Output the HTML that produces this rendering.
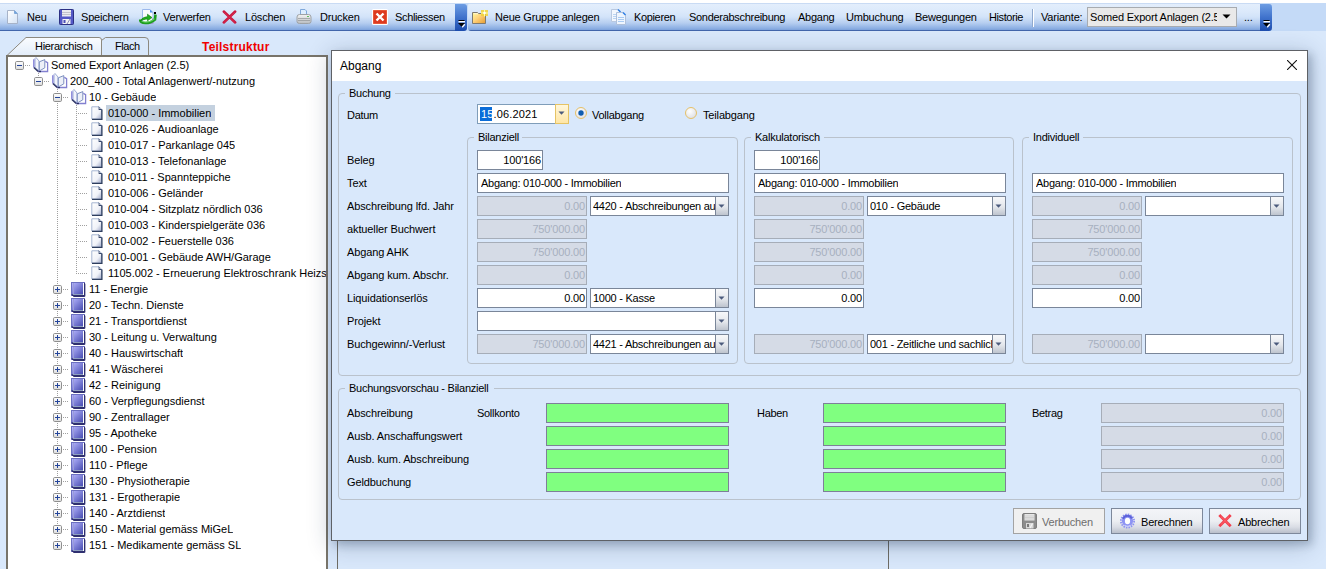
<!DOCTYPE html><html><head><meta charset="utf-8"><style>
html,body{margin:0;padding:0;}
body{width:1326px;height:569px;position:relative;overflow:hidden;background:#D9E8FB;font-family:"Liberation Sans", sans-serif;}
.t{position:absolute;white-space:nowrap;}
div,svg{box-sizing:border-box;}
</style></head><body>
<div style="position:absolute;left:0px;top:0px;width:1326px;height:3px;background:#fff"></div>
<div style="position:absolute;left:0px;top:3px;width:1326px;height:28px;background:#C4DAF7"></div>
<div style="position:absolute;left:0px;top:3px;width:457px;height:28px;background:linear-gradient(to bottom,#C9DBF4 0px,#C9DBF4 1px,#E3EEFC 1px,#DBE9FB 9px,#D2E3F9 14px,#B6CEF0 20px,#93B4E5 24.5px,#7EA3DC 27px,#4266AB 27px,#4266AB 28px);border-radius:0 0 0 0;"></div>
<div style="position:absolute;left:468px;top:3px;width:794px;height:28px;background:linear-gradient(to bottom,#C9DBF4 0px,#C9DBF4 1px,#E3EEFC 1px,#DBE9FB 9px,#D2E3F9 14px,#B6CEF0 20px,#93B4E5 24.5px,#7EA3DC 27px,#4266AB 27px,#4266AB 28px);border-radius:3px 0 0 3px;"></div>
<div style="position:absolute;left:455px;top:4px;width:12px;height:27px;background:linear-gradient(to bottom,#6D9DE3 0%,#3F72CC 50%,#1D4DAE 100%);border-radius:0 3px 3px 0;"></div>
<div style="position:absolute;left:1260px;top:4px;width:12px;height:27px;background:linear-gradient(to bottom,#6D9DE3 0%,#3F72CC 50%,#1D4DAE 100%);border-radius:0 3px 3px 0;"></div>
<svg style="position:absolute;left:456px;top:19px" width="10" height="10" viewBox="0 0 10 10"><rect x="2.5" y="1" width="6" height="1" fill="#000"/><rect x="2.5" y="2" width="6.5" height="1.4" fill="#fff"/><path d="M2 4 H9 L5.5 7.8 Z" fill="#000"/><path d="M8.8 5.2 L6.2 8.2" stroke="#fff" stroke-width="1.3"/></svg>
<svg style="position:absolute;left:1261px;top:19px" width="10" height="10" viewBox="0 0 10 10"><rect x="2.5" y="1" width="6" height="1" fill="#000"/><rect x="2.5" y="2" width="6.5" height="1.4" fill="#fff"/><path d="M2 4 H9 L5.5 7.8 Z" fill="#000"/><path d="M8.8 5.2 L6.2 8.2" stroke="#fff" stroke-width="1.3"/></svg>
<svg width="0" height="0" style="position:absolute"><defs>
<linearGradient id="gpage" x1="0" y1="0" x2="1" y2="1"><stop offset="0" stop-color="#FFFFFF"/><stop offset="1" stop-color="#D5E3F5"/></linearGradient>
<linearGradient id="gbook" x1="0" y1="0" x2="1" y2="1"><stop offset="0" stop-color="#B8B8FF"/><stop offset="1" stop-color="#3A3FA8"/></linearGradient>
<linearGradient id="gdoc" x1="0" y1="0" x2="1" y2="1"><stop offset="0" stop-color="#FFFFFF"/><stop offset="0.6" stop-color="#F0F2F8"/><stop offset="1" stop-color="#9EA8C8"/></linearGradient>
<linearGradient id="gfold" x1="0" y1="0" x2="1" y2="1"><stop offset="0" stop-color="#FFFCA0"/><stop offset="0.45" stop-color="#FFD27A"/><stop offset="1" stop-color="#E59A2E"/></linearGradient><linearGradient id="gprint" x1="0" y1="0" x2="0" y2="1"><stop offset="0" stop-color="#F4F4F4"/><stop offset="1" stop-color="#B8BCC0"/></linearGradient>
<linearGradient id="gbtn" x1="0" y1="0" x2="0" y2="1"><stop offset="0" stop-color="#FBFBFC"/><stop offset="0.5" stop-color="#ECEDF0"/><stop offset="1" stop-color="#C9CCD4"/></linearGradient>
</defs></svg>
<svg style="position:absolute;left:6px;top:10px" width="13" height="15" viewBox="0 0 13 15"><path d="M1.5 0.5 H8.5 L11.5 3.5 V13.5 H1.5 Z" fill="url(#gpage)" stroke="#A7B3C8"/><path d="M8.5 0.5 V3.5 H11.5" fill="#6BA6E6" stroke="#7FA6D6"/></svg>
<div class="t" style="left:27px;top:11.69px;font-size:11px;line-height:11px;color:#000;letter-spacing:-0.2px;">Neu</div>
<svg style="position:absolute;left:59px;top:9px" width="15" height="16" viewBox="0 0 15 16"><rect x="0.5" y="0.5" width="14" height="15" rx="0.8" fill="#5458C6" stroke="#2C3083"/><rect x="3" y="1" width="9" height="6.5" fill="#ECECF0"/><rect x="3" y="3" width="9" height="0.8" fill="#B9B9C4"/><rect x="3" y="5" width="9" height="0.8" fill="#B9B9C4"/><rect x="3.5" y="10" width="8" height="5" fill="#F2F2F4"/><rect x="4.5" y="11" width="2" height="3" fill="#4A4FB8"/><path d="M8 15 L11 10" stroke="#6D6FA8" stroke-width="0.8"/></svg>
<div class="t" style="left:81px;top:11.69px;font-size:11px;line-height:11px;color:#000;letter-spacing:-0.2px;">Speichern</div>
<svg style="position:absolute;left:139px;top:8px" width="18" height="17" viewBox="0 0 18 17"><path d="M3.5 1.5 H11 L14 4.5 V15.5 H3.5 Z" fill="#FAFCFF" stroke="#9BB8EC" stroke-width="1"/><path d="M3.5 15.5 H14 V10" fill="none" stroke="#A894D8" stroke-width="1"/><path d="M11 1.5 V4.5 H14 Z" fill="#4C92F0"/><rect x="15" y="4" width="2" height="2" fill="#000"/><path d="M1.2 11.5 C1 16, 10 16.5, 16 11.5 L16.5 6.5" stroke="#1E9E1E" stroke-width="2.6" fill="none"/><path d="M2 12.5 C5 15, 11 14.5, 15.5 11" stroke="#7BE07B" stroke-width="0.9" fill="none"/><path d="M1.5 13 C2.5 10, 6 8.8, 8.5 8.8 L8.5 6.2 L13 9.6 L8.5 12.8 L8.5 11 C6 11, 3.5 12, 1.5 13 Z" fill="#22B022" stroke="#0D7A0D" stroke-width="0.6"/></svg>
<div class="t" style="left:163px;top:11.69px;font-size:11px;line-height:11px;color:#000;letter-spacing:-0.2px;">Verwerfen</div>
<svg style="position:absolute;left:222px;top:10px" width="15" height="14" viewBox="0 0 15 14"><path d="M1.8 1.5 L13.2 12.5 M13.2 1.5 L1.8 12.5" stroke="#C8173F" stroke-width="2.5" stroke-linecap="round"/><path d="M2.5 2.5 L12.5 12 M12.5 2.5 L2.5 12" stroke="#DE2E55" stroke-width="0.8" stroke-linecap="round"/></svg>
<div class="t" style="left:245px;top:11.69px;font-size:11px;line-height:11px;color:#000;letter-spacing:-0.2px;">Löschen</div>
<svg style="position:absolute;left:296px;top:8px" width="16" height="17" viewBox="0 0 16 17"><path d="M4.5 1.5 H9 L10.5 3 V8 H4.5 Z" fill="#DDEEFF" stroke="#7FA8DA" stroke-width="1"/><path d="M1 9 Q1 6.5 3.5 6.5 H12.5 Q15 6.5 15 9 V13.5 Q15 15.5 12.5 15.5 H3.5 Q1 15.5 1 13.5 Z" fill="url(#gprint)" stroke="#9EA2A6" stroke-width="1"/><path d="M2 10.5 H14 M2 12.5 H14" stroke="#8F9397" stroke-width="0.7"/><rect x="11" y="8" width="2" height="1" fill="#5FBF5F"/></svg>
<div class="t" style="left:320px;top:11.69px;font-size:11px;line-height:11px;color:#000;letter-spacing:-0.2px;">Drucken</div>
<svg style="position:absolute;left:372px;top:9px" width="16" height="16" viewBox="0 0 16 16"><rect x="0" y="0" width="16" height="16" rx="1.5" fill="#FFFFFF"/><rect x="1" y="1" width="14" height="14" rx="1" fill="#DC3A20"/><rect x="1.5" y="1.5" width="13" height="13" fill="none" stroke="#F06A4A" stroke-width="0.6"/><path d="M4.5 4.5 L11.5 11.5 M11.5 4.5 L4.5 11.5" stroke="#fff" stroke-width="2.4"/></svg>
<div class="t" style="left:395px;top:11.69px;font-size:11px;line-height:11px;color:#000;letter-spacing:-0.35px;">Schliessen</div>
<svg style="position:absolute;left:471px;top:9px" width="18" height="16" viewBox="0 0 18 16"><path d="M1.5 3.5 H6.5 L7.5 4.5 H14.5 V14.5 H1.5 Z" fill="url(#gfold)" stroke="#7E7A70" stroke-width="1"/><rect x="3" y="4.2" width="4" height="1" fill="#FFF7D8"/><rect x="10" y="1" width="7" height="6" fill="#F2D23A" opacity="0.85"/><path d="M13.5 0.5 V7.5 M10 4 H17" stroke="#FFFFA0" stroke-width="1"/><circle cx="13.5" cy="4" r="1.3" fill="#FFFFFF"/></svg>
<div class="t" style="left:495px;top:11.69px;font-size:11px;line-height:11px;color:#000;letter-spacing:-0.2px;">Neue Gruppe anlegen</div>
<svg style="position:absolute;left:610px;top:8px" width="17" height="18" viewBox="0 0 17 18"><path d="M1.5 1.5 H8 L10.5 4 V13.5 H1.5 Z" fill="#F2F7FE" stroke="#B9C9E0" stroke-width="1"/><path d="M8 1.5 L10.5 4" stroke="#2E7FE6" stroke-width="1.4"/><path d="M6.5 4.5 H13 L15.5 7 V16.5 H6.5 Z" fill="#EEF5FE" stroke="#AFC0DA" stroke-width="1"/><path d="M13 4.5 L15.5 7" stroke="#2E7FE6" stroke-width="1.4"/><path d="M8 9.5 h6 M8 11.5 h6 M8 13.5 h6" stroke="#A9CBF2" stroke-width="1"/><path d="M3 6.5 h3 M3 8.5 h3 M3 10.5 h3" stroke="#B8D4F4" stroke-width="1"/></svg>
<div class="t" style="left:634px;top:11.69px;font-size:11px;line-height:11px;color:#000;letter-spacing:-0.35px;">Kopieren</div>
<div class="t" style="left:689px;top:11.69px;font-size:11px;line-height:11px;color:#000;letter-spacing:-0.3px;">Sonderabschreibung</div>
<div class="t" style="left:798px;top:11.69px;font-size:11px;line-height:11px;color:#000;letter-spacing:-0.25px;">Abgang</div>
<div class="t" style="left:846px;top:11.69px;font-size:11px;line-height:11px;color:#000;letter-spacing:-0.2px;">Umbuchung</div>
<div class="t" style="left:915px;top:11.69px;font-size:11px;line-height:11px;color:#000;letter-spacing:-0.25px;">Bewegungen</div>
<div class="t" style="left:989px;top:11.69px;font-size:11px;line-height:11px;color:#000;letter-spacing:-0.4px;">Historie</div>
<div style="position:absolute;left:1032px;top:9px;width:1px;height:18px;background:#8FA9CE"></div>
<div style="position:absolute;left:1033px;top:9px;width:1px;height:18px;background:#FFFFFF"></div>
<div class="t" style="left:1041px;top:11.69px;font-size:11px;line-height:11px;color:#000;letter-spacing:-0.2px;">Variante:</div>
<div style="position:absolute;left:1087px;top:7px;width:150px;height:20px;background:#E9E9E9;border:1px solid #A7ABB0;"></div>
<div class="t" style="left:1090px;top:11.69px;font-size:11px;line-height:11px;color:#000;letter-spacing:-0.2px;width:127px;overflow:hidden;">Somed Export Anlagen (2.5</div>
<svg style="position:absolute;left:1222px;top:14px" width="9" height="6" viewBox="0 0 9 6"><path d="M0.5 0.5 H8.5 L4.5 4.5 Z" fill="#000"/></svg>
<div class="t" style="left:1244px;top:11.69px;font-size:11px;line-height:11px;color:#000;letter-spacing:-0.2px;">...</div>
<svg style="position:absolute;left:6px;top:36px" width="145" height="21" viewBox="0 0 145 21"><path d="M1 19.5 L20 1.5 H93 Q95.5 1.5 95.5 4 V19.5" fill="url(#gtab1)" stroke="#8D897F"/><path d="M95.5 4.5 L99.5 1.5 H139 Q142.5 1.5 142.5 5 V19.5" fill="#D9E8FB" stroke="#8D897F"/></svg>
<svg width="0" height="0" style="position:absolute"><defs><linearGradient id="gtab1" x1="0" y1="0" x2="0" y2="1"><stop offset="0" stop-color="#FAFCFF"/><stop offset="1" stop-color="#E3EDF9"/></linearGradient></defs></svg>
<div class="t" style="left:35px;top:40.69px;font-size:11px;line-height:11px;color:#000;letter-spacing:-0.3px;">Hierarchisch</div>
<div class="t" style="left:115px;top:40.69px;font-size:11px;line-height:11px;color:#000;letter-spacing:-0.45px;">Flach</div>
<div class="t" style="left:202px;top:40.84px;font-size:12px;line-height:12px;color:#F00000;letter-spacing:0.2px;font-weight:bold;">Teilstruktur</div>
<div style="position:absolute;left:6px;top:55px;width:322px;height:520px;background:#fff;border:2px solid #78746A;border-bottom:none;"></div>
<div style="position:absolute;left:337px;top:540px;width:1px;height:40px;background:#6E6C64"></div>
<div style="position:absolute;left:888px;top:540px;width:1px;height:40px;background:#6E6C64"></div>
<svg style="position:absolute;left:0;top:0" width="330" height="569"><defs><pattern id="dotv" width="1" height="2" patternUnits="userSpaceOnUse"><rect width="1" height="1" fill="#A0A0A0"/></pattern><pattern id="doth" width="2" height="1" patternUnits="userSpaceOnUse"><rect width="1" height="1" fill="#A0A0A0"/></pattern><linearGradient id="gbox" x1="0" y1="0" x2="0" y2="1"><stop offset="0" stop-color="#FFFFFF"/><stop offset="1" stop-color="#DCDCDC"/></linearGradient></defs><rect x="25" y="65" width="1" height="1" fill="#A0A0A0"/><rect x="27" y="65" width="1" height="1" fill="#A0A0A0"/><rect x="29" y="65" width="1" height="1" fill="#A0A0A0"/><rect x="44" y="81" width="1" height="1" fill="#A0A0A0"/><rect x="46" y="81" width="1" height="1" fill="#A0A0A0"/><rect x="48" y="81" width="1" height="1" fill="#A0A0A0"/><rect x="63" y="97" width="1" height="1" fill="#A0A0A0"/><rect x="65" y="97" width="1" height="1" fill="#A0A0A0"/><rect x="67" y="97" width="1" height="1" fill="#A0A0A0"/><rect x="78" y="113" width="1" height="1" fill="#A0A0A0"/><rect x="80" y="113" width="1" height="1" fill="#A0A0A0"/><rect x="82" y="113" width="1" height="1" fill="#A0A0A0"/><rect x="84" y="113" width="1" height="1" fill="#A0A0A0"/><rect x="86" y="113" width="1" height="1" fill="#A0A0A0"/><rect x="78" y="129" width="1" height="1" fill="#A0A0A0"/><rect x="80" y="129" width="1" height="1" fill="#A0A0A0"/><rect x="82" y="129" width="1" height="1" fill="#A0A0A0"/><rect x="84" y="129" width="1" height="1" fill="#A0A0A0"/><rect x="86" y="129" width="1" height="1" fill="#A0A0A0"/><rect x="78" y="145" width="1" height="1" fill="#A0A0A0"/><rect x="80" y="145" width="1" height="1" fill="#A0A0A0"/><rect x="82" y="145" width="1" height="1" fill="#A0A0A0"/><rect x="84" y="145" width="1" height="1" fill="#A0A0A0"/><rect x="86" y="145" width="1" height="1" fill="#A0A0A0"/><rect x="78" y="161" width="1" height="1" fill="#A0A0A0"/><rect x="80" y="161" width="1" height="1" fill="#A0A0A0"/><rect x="82" y="161" width="1" height="1" fill="#A0A0A0"/><rect x="84" y="161" width="1" height="1" fill="#A0A0A0"/><rect x="86" y="161" width="1" height="1" fill="#A0A0A0"/><rect x="78" y="177" width="1" height="1" fill="#A0A0A0"/><rect x="80" y="177" width="1" height="1" fill="#A0A0A0"/><rect x="82" y="177" width="1" height="1" fill="#A0A0A0"/><rect x="84" y="177" width="1" height="1" fill="#A0A0A0"/><rect x="86" y="177" width="1" height="1" fill="#A0A0A0"/><rect x="78" y="193" width="1" height="1" fill="#A0A0A0"/><rect x="80" y="193" width="1" height="1" fill="#A0A0A0"/><rect x="82" y="193" width="1" height="1" fill="#A0A0A0"/><rect x="84" y="193" width="1" height="1" fill="#A0A0A0"/><rect x="86" y="193" width="1" height="1" fill="#A0A0A0"/><rect x="78" y="209" width="1" height="1" fill="#A0A0A0"/><rect x="80" y="209" width="1" height="1" fill="#A0A0A0"/><rect x="82" y="209" width="1" height="1" fill="#A0A0A0"/><rect x="84" y="209" width="1" height="1" fill="#A0A0A0"/><rect x="86" y="209" width="1" height="1" fill="#A0A0A0"/><rect x="78" y="225" width="1" height="1" fill="#A0A0A0"/><rect x="80" y="225" width="1" height="1" fill="#A0A0A0"/><rect x="82" y="225" width="1" height="1" fill="#A0A0A0"/><rect x="84" y="225" width="1" height="1" fill="#A0A0A0"/><rect x="86" y="225" width="1" height="1" fill="#A0A0A0"/><rect x="78" y="241" width="1" height="1" fill="#A0A0A0"/><rect x="80" y="241" width="1" height="1" fill="#A0A0A0"/><rect x="82" y="241" width="1" height="1" fill="#A0A0A0"/><rect x="84" y="241" width="1" height="1" fill="#A0A0A0"/><rect x="86" y="241" width="1" height="1" fill="#A0A0A0"/><rect x="78" y="257" width="1" height="1" fill="#A0A0A0"/><rect x="80" y="257" width="1" height="1" fill="#A0A0A0"/><rect x="82" y="257" width="1" height="1" fill="#A0A0A0"/><rect x="84" y="257" width="1" height="1" fill="#A0A0A0"/><rect x="86" y="257" width="1" height="1" fill="#A0A0A0"/><rect x="78" y="273" width="1" height="1" fill="#A0A0A0"/><rect x="80" y="273" width="1" height="1" fill="#A0A0A0"/><rect x="82" y="273" width="1" height="1" fill="#A0A0A0"/><rect x="84" y="273" width="1" height="1" fill="#A0A0A0"/><rect x="86" y="273" width="1" height="1" fill="#A0A0A0"/><rect x="63" y="289" width="1" height="1" fill="#A0A0A0"/><rect x="65" y="289" width="1" height="1" fill="#A0A0A0"/><rect x="67" y="289" width="1" height="1" fill="#A0A0A0"/><rect x="63" y="305" width="1" height="1" fill="#A0A0A0"/><rect x="65" y="305" width="1" height="1" fill="#A0A0A0"/><rect x="67" y="305" width="1" height="1" fill="#A0A0A0"/><rect x="63" y="321" width="1" height="1" fill="#A0A0A0"/><rect x="65" y="321" width="1" height="1" fill="#A0A0A0"/><rect x="67" y="321" width="1" height="1" fill="#A0A0A0"/><rect x="63" y="337" width="1" height="1" fill="#A0A0A0"/><rect x="65" y="337" width="1" height="1" fill="#A0A0A0"/><rect x="67" y="337" width="1" height="1" fill="#A0A0A0"/><rect x="63" y="353" width="1" height="1" fill="#A0A0A0"/><rect x="65" y="353" width="1" height="1" fill="#A0A0A0"/><rect x="67" y="353" width="1" height="1" fill="#A0A0A0"/><rect x="63" y="369" width="1" height="1" fill="#A0A0A0"/><rect x="65" y="369" width="1" height="1" fill="#A0A0A0"/><rect x="67" y="369" width="1" height="1" fill="#A0A0A0"/><rect x="63" y="385" width="1" height="1" fill="#A0A0A0"/><rect x="65" y="385" width="1" height="1" fill="#A0A0A0"/><rect x="67" y="385" width="1" height="1" fill="#A0A0A0"/><rect x="63" y="401" width="1" height="1" fill="#A0A0A0"/><rect x="65" y="401" width="1" height="1" fill="#A0A0A0"/><rect x="67" y="401" width="1" height="1" fill="#A0A0A0"/><rect x="63" y="417" width="1" height="1" fill="#A0A0A0"/><rect x="65" y="417" width="1" height="1" fill="#A0A0A0"/><rect x="67" y="417" width="1" height="1" fill="#A0A0A0"/><rect x="63" y="433" width="1" height="1" fill="#A0A0A0"/><rect x="65" y="433" width="1" height="1" fill="#A0A0A0"/><rect x="67" y="433" width="1" height="1" fill="#A0A0A0"/><rect x="63" y="449" width="1" height="1" fill="#A0A0A0"/><rect x="65" y="449" width="1" height="1" fill="#A0A0A0"/><rect x="67" y="449" width="1" height="1" fill="#A0A0A0"/><rect x="63" y="465" width="1" height="1" fill="#A0A0A0"/><rect x="65" y="465" width="1" height="1" fill="#A0A0A0"/><rect x="67" y="465" width="1" height="1" fill="#A0A0A0"/><rect x="63" y="481" width="1" height="1" fill="#A0A0A0"/><rect x="65" y="481" width="1" height="1" fill="#A0A0A0"/><rect x="67" y="481" width="1" height="1" fill="#A0A0A0"/><rect x="63" y="497" width="1" height="1" fill="#A0A0A0"/><rect x="65" y="497" width="1" height="1" fill="#A0A0A0"/><rect x="67" y="497" width="1" height="1" fill="#A0A0A0"/><rect x="63" y="513" width="1" height="1" fill="#A0A0A0"/><rect x="65" y="513" width="1" height="1" fill="#A0A0A0"/><rect x="67" y="513" width="1" height="1" fill="#A0A0A0"/><rect x="63" y="529" width="1" height="1" fill="#A0A0A0"/><rect x="65" y="529" width="1" height="1" fill="#A0A0A0"/><rect x="67" y="529" width="1" height="1" fill="#A0A0A0"/><rect x="63" y="545" width="1" height="1" fill="#A0A0A0"/><rect x="65" y="545" width="1" height="1" fill="#A0A0A0"/><rect x="67" y="545" width="1" height="1" fill="#A0A0A0"/><rect x="38" y="73" width="1" height="1" fill="#A0A0A0"/><rect x="38" y="75" width="1" height="1" fill="#A0A0A0"/><rect x="57" y="89" width="1" height="1" fill="#A0A0A0"/><rect x="57" y="91" width="1" height="1" fill="#A0A0A0"/><rect x="76" y="105" width="1" height="1" fill="#A0A0A0"/><rect x="76" y="107" width="1" height="1" fill="#A0A0A0"/><rect x="76" y="109" width="1" height="1" fill="#A0A0A0"/><rect x="76" y="111" width="1" height="1" fill="#A0A0A0"/><rect x="76" y="113" width="1" height="1" fill="#A0A0A0"/><rect x="76" y="115" width="1" height="1" fill="#A0A0A0"/><rect x="76" y="117" width="1" height="1" fill="#A0A0A0"/><rect x="76" y="119" width="1" height="1" fill="#A0A0A0"/><rect x="76" y="121" width="1" height="1" fill="#A0A0A0"/><rect x="76" y="123" width="1" height="1" fill="#A0A0A0"/><rect x="76" y="125" width="1" height="1" fill="#A0A0A0"/><rect x="76" y="127" width="1" height="1" fill="#A0A0A0"/><rect x="76" y="129" width="1" height="1" fill="#A0A0A0"/><rect x="76" y="131" width="1" height="1" fill="#A0A0A0"/><rect x="76" y="133" width="1" height="1" fill="#A0A0A0"/><rect x="76" y="135" width="1" height="1" fill="#A0A0A0"/><rect x="76" y="137" width="1" height="1" fill="#A0A0A0"/><rect x="76" y="139" width="1" height="1" fill="#A0A0A0"/><rect x="76" y="141" width="1" height="1" fill="#A0A0A0"/><rect x="76" y="143" width="1" height="1" fill="#A0A0A0"/><rect x="76" y="145" width="1" height="1" fill="#A0A0A0"/><rect x="76" y="147" width="1" height="1" fill="#A0A0A0"/><rect x="76" y="149" width="1" height="1" fill="#A0A0A0"/><rect x="76" y="151" width="1" height="1" fill="#A0A0A0"/><rect x="76" y="153" width="1" height="1" fill="#A0A0A0"/><rect x="76" y="155" width="1" height="1" fill="#A0A0A0"/><rect x="76" y="157" width="1" height="1" fill="#A0A0A0"/><rect x="76" y="159" width="1" height="1" fill="#A0A0A0"/><rect x="76" y="161" width="1" height="1" fill="#A0A0A0"/><rect x="76" y="163" width="1" height="1" fill="#A0A0A0"/><rect x="76" y="165" width="1" height="1" fill="#A0A0A0"/><rect x="76" y="167" width="1" height="1" fill="#A0A0A0"/><rect x="76" y="169" width="1" height="1" fill="#A0A0A0"/><rect x="76" y="171" width="1" height="1" fill="#A0A0A0"/><rect x="76" y="173" width="1" height="1" fill="#A0A0A0"/><rect x="76" y="175" width="1" height="1" fill="#A0A0A0"/><rect x="76" y="177" width="1" height="1" fill="#A0A0A0"/><rect x="76" y="179" width="1" height="1" fill="#A0A0A0"/><rect x="76" y="181" width="1" height="1" fill="#A0A0A0"/><rect x="76" y="183" width="1" height="1" fill="#A0A0A0"/><rect x="76" y="185" width="1" height="1" fill="#A0A0A0"/><rect x="76" y="187" width="1" height="1" fill="#A0A0A0"/><rect x="76" y="189" width="1" height="1" fill="#A0A0A0"/><rect x="76" y="191" width="1" height="1" fill="#A0A0A0"/><rect x="76" y="193" width="1" height="1" fill="#A0A0A0"/><rect x="76" y="195" width="1" height="1" fill="#A0A0A0"/><rect x="76" y="197" width="1" height="1" fill="#A0A0A0"/><rect x="76" y="199" width="1" height="1" fill="#A0A0A0"/><rect x="76" y="201" width="1" height="1" fill="#A0A0A0"/><rect x="76" y="203" width="1" height="1" fill="#A0A0A0"/><rect x="76" y="205" width="1" height="1" fill="#A0A0A0"/><rect x="76" y="207" width="1" height="1" fill="#A0A0A0"/><rect x="76" y="209" width="1" height="1" fill="#A0A0A0"/><rect x="76" y="211" width="1" height="1" fill="#A0A0A0"/><rect x="76" y="213" width="1" height="1" fill="#A0A0A0"/><rect x="76" y="215" width="1" height="1" fill="#A0A0A0"/><rect x="76" y="217" width="1" height="1" fill="#A0A0A0"/><rect x="76" y="219" width="1" height="1" fill="#A0A0A0"/><rect x="76" y="221" width="1" height="1" fill="#A0A0A0"/><rect x="76" y="223" width="1" height="1" fill="#A0A0A0"/><rect x="76" y="225" width="1" height="1" fill="#A0A0A0"/><rect x="76" y="227" width="1" height="1" fill="#A0A0A0"/><rect x="76" y="229" width="1" height="1" fill="#A0A0A0"/><rect x="76" y="231" width="1" height="1" fill="#A0A0A0"/><rect x="76" y="233" width="1" height="1" fill="#A0A0A0"/><rect x="76" y="235" width="1" height="1" fill="#A0A0A0"/><rect x="76" y="237" width="1" height="1" fill="#A0A0A0"/><rect x="76" y="239" width="1" height="1" fill="#A0A0A0"/><rect x="76" y="241" width="1" height="1" fill="#A0A0A0"/><rect x="76" y="243" width="1" height="1" fill="#A0A0A0"/><rect x="76" y="245" width="1" height="1" fill="#A0A0A0"/><rect x="76" y="247" width="1" height="1" fill="#A0A0A0"/><rect x="76" y="249" width="1" height="1" fill="#A0A0A0"/><rect x="76" y="251" width="1" height="1" fill="#A0A0A0"/><rect x="76" y="253" width="1" height="1" fill="#A0A0A0"/><rect x="76" y="255" width="1" height="1" fill="#A0A0A0"/><rect x="76" y="257" width="1" height="1" fill="#A0A0A0"/><rect x="76" y="259" width="1" height="1" fill="#A0A0A0"/><rect x="76" y="261" width="1" height="1" fill="#A0A0A0"/><rect x="76" y="263" width="1" height="1" fill="#A0A0A0"/><rect x="76" y="265" width="1" height="1" fill="#A0A0A0"/><rect x="76" y="267" width="1" height="1" fill="#A0A0A0"/><rect x="76" y="269" width="1" height="1" fill="#A0A0A0"/><rect x="76" y="271" width="1" height="1" fill="#A0A0A0"/><rect x="76" y="273" width="1" height="1" fill="#A0A0A0"/><rect x="57" y="103" width="1" height="1" fill="#A0A0A0"/><rect x="57" y="105" width="1" height="1" fill="#A0A0A0"/><rect x="57" y="107" width="1" height="1" fill="#A0A0A0"/><rect x="57" y="109" width="1" height="1" fill="#A0A0A0"/><rect x="57" y="111" width="1" height="1" fill="#A0A0A0"/><rect x="57" y="113" width="1" height="1" fill="#A0A0A0"/><rect x="57" y="115" width="1" height="1" fill="#A0A0A0"/><rect x="57" y="117" width="1" height="1" fill="#A0A0A0"/><rect x="57" y="119" width="1" height="1" fill="#A0A0A0"/><rect x="57" y="121" width="1" height="1" fill="#A0A0A0"/><rect x="57" y="123" width="1" height="1" fill="#A0A0A0"/><rect x="57" y="125" width="1" height="1" fill="#A0A0A0"/><rect x="57" y="127" width="1" height="1" fill="#A0A0A0"/><rect x="57" y="129" width="1" height="1" fill="#A0A0A0"/><rect x="57" y="131" width="1" height="1" fill="#A0A0A0"/><rect x="57" y="133" width="1" height="1" fill="#A0A0A0"/><rect x="57" y="135" width="1" height="1" fill="#A0A0A0"/><rect x="57" y="137" width="1" height="1" fill="#A0A0A0"/><rect x="57" y="139" width="1" height="1" fill="#A0A0A0"/><rect x="57" y="141" width="1" height="1" fill="#A0A0A0"/><rect x="57" y="143" width="1" height="1" fill="#A0A0A0"/><rect x="57" y="145" width="1" height="1" fill="#A0A0A0"/><rect x="57" y="147" width="1" height="1" fill="#A0A0A0"/><rect x="57" y="149" width="1" height="1" fill="#A0A0A0"/><rect x="57" y="151" width="1" height="1" fill="#A0A0A0"/><rect x="57" y="153" width="1" height="1" fill="#A0A0A0"/><rect x="57" y="155" width="1" height="1" fill="#A0A0A0"/><rect x="57" y="157" width="1" height="1" fill="#A0A0A0"/><rect x="57" y="159" width="1" height="1" fill="#A0A0A0"/><rect x="57" y="161" width="1" height="1" fill="#A0A0A0"/><rect x="57" y="163" width="1" height="1" fill="#A0A0A0"/><rect x="57" y="165" width="1" height="1" fill="#A0A0A0"/><rect x="57" y="167" width="1" height="1" fill="#A0A0A0"/><rect x="57" y="169" width="1" height="1" fill="#A0A0A0"/><rect x="57" y="171" width="1" height="1" fill="#A0A0A0"/><rect x="57" y="173" width="1" height="1" fill="#A0A0A0"/><rect x="57" y="175" width="1" height="1" fill="#A0A0A0"/><rect x="57" y="177" width="1" height="1" fill="#A0A0A0"/><rect x="57" y="179" width="1" height="1" fill="#A0A0A0"/><rect x="57" y="181" width="1" height="1" fill="#A0A0A0"/><rect x="57" y="183" width="1" height="1" fill="#A0A0A0"/><rect x="57" y="185" width="1" height="1" fill="#A0A0A0"/><rect x="57" y="187" width="1" height="1" fill="#A0A0A0"/><rect x="57" y="189" width="1" height="1" fill="#A0A0A0"/><rect x="57" y="191" width="1" height="1" fill="#A0A0A0"/><rect x="57" y="193" width="1" height="1" fill="#A0A0A0"/><rect x="57" y="195" width="1" height="1" fill="#A0A0A0"/><rect x="57" y="197" width="1" height="1" fill="#A0A0A0"/><rect x="57" y="199" width="1" height="1" fill="#A0A0A0"/><rect x="57" y="201" width="1" height="1" fill="#A0A0A0"/><rect x="57" y="203" width="1" height="1" fill="#A0A0A0"/><rect x="57" y="205" width="1" height="1" fill="#A0A0A0"/><rect x="57" y="207" width="1" height="1" fill="#A0A0A0"/><rect x="57" y="209" width="1" height="1" fill="#A0A0A0"/><rect x="57" y="211" width="1" height="1" fill="#A0A0A0"/><rect x="57" y="213" width="1" height="1" fill="#A0A0A0"/><rect x="57" y="215" width="1" height="1" fill="#A0A0A0"/><rect x="57" y="217" width="1" height="1" fill="#A0A0A0"/><rect x="57" y="219" width="1" height="1" fill="#A0A0A0"/><rect x="57" y="221" width="1" height="1" fill="#A0A0A0"/><rect x="57" y="223" width="1" height="1" fill="#A0A0A0"/><rect x="57" y="225" width="1" height="1" fill="#A0A0A0"/><rect x="57" y="227" width="1" height="1" fill="#A0A0A0"/><rect x="57" y="229" width="1" height="1" fill="#A0A0A0"/><rect x="57" y="231" width="1" height="1" fill="#A0A0A0"/><rect x="57" y="233" width="1" height="1" fill="#A0A0A0"/><rect x="57" y="235" width="1" height="1" fill="#A0A0A0"/><rect x="57" y="237" width="1" height="1" fill="#A0A0A0"/><rect x="57" y="239" width="1" height="1" fill="#A0A0A0"/><rect x="57" y="241" width="1" height="1" fill="#A0A0A0"/><rect x="57" y="243" width="1" height="1" fill="#A0A0A0"/><rect x="57" y="245" width="1" height="1" fill="#A0A0A0"/><rect x="57" y="247" width="1" height="1" fill="#A0A0A0"/><rect x="57" y="249" width="1" height="1" fill="#A0A0A0"/><rect x="57" y="251" width="1" height="1" fill="#A0A0A0"/><rect x="57" y="253" width="1" height="1" fill="#A0A0A0"/><rect x="57" y="255" width="1" height="1" fill="#A0A0A0"/><rect x="57" y="257" width="1" height="1" fill="#A0A0A0"/><rect x="57" y="259" width="1" height="1" fill="#A0A0A0"/><rect x="57" y="261" width="1" height="1" fill="#A0A0A0"/><rect x="57" y="263" width="1" height="1" fill="#A0A0A0"/><rect x="57" y="265" width="1" height="1" fill="#A0A0A0"/><rect x="57" y="267" width="1" height="1" fill="#A0A0A0"/><rect x="57" y="269" width="1" height="1" fill="#A0A0A0"/><rect x="57" y="271" width="1" height="1" fill="#A0A0A0"/><rect x="57" y="273" width="1" height="1" fill="#A0A0A0"/><rect x="57" y="275" width="1" height="1" fill="#A0A0A0"/><rect x="57" y="277" width="1" height="1" fill="#A0A0A0"/><rect x="57" y="279" width="1" height="1" fill="#A0A0A0"/><rect x="57" y="281" width="1" height="1" fill="#A0A0A0"/><rect x="57" y="283" width="1" height="1" fill="#A0A0A0"/><rect x="57" y="285" width="1" height="1" fill="#A0A0A0"/><rect x="57" y="287" width="1" height="1" fill="#A0A0A0"/><rect x="57" y="289" width="1" height="1" fill="#A0A0A0"/><rect x="57" y="291" width="1" height="1" fill="#A0A0A0"/><rect x="57" y="293" width="1" height="1" fill="#A0A0A0"/><rect x="57" y="295" width="1" height="1" fill="#A0A0A0"/><rect x="57" y="297" width="1" height="1" fill="#A0A0A0"/><rect x="57" y="299" width="1" height="1" fill="#A0A0A0"/><rect x="57" y="301" width="1" height="1" fill="#A0A0A0"/><rect x="57" y="303" width="1" height="1" fill="#A0A0A0"/><rect x="57" y="305" width="1" height="1" fill="#A0A0A0"/><rect x="57" y="307" width="1" height="1" fill="#A0A0A0"/><rect x="57" y="309" width="1" height="1" fill="#A0A0A0"/><rect x="57" y="311" width="1" height="1" fill="#A0A0A0"/><rect x="57" y="313" width="1" height="1" fill="#A0A0A0"/><rect x="57" y="315" width="1" height="1" fill="#A0A0A0"/><rect x="57" y="317" width="1" height="1" fill="#A0A0A0"/><rect x="57" y="319" width="1" height="1" fill="#A0A0A0"/><rect x="57" y="321" width="1" height="1" fill="#A0A0A0"/><rect x="57" y="323" width="1" height="1" fill="#A0A0A0"/><rect x="57" y="325" width="1" height="1" fill="#A0A0A0"/><rect x="57" y="327" width="1" height="1" fill="#A0A0A0"/><rect x="57" y="329" width="1" height="1" fill="#A0A0A0"/><rect x="57" y="331" width="1" height="1" fill="#A0A0A0"/><rect x="57" y="333" width="1" height="1" fill="#A0A0A0"/><rect x="57" y="335" width="1" height="1" fill="#A0A0A0"/><rect x="57" y="337" width="1" height="1" fill="#A0A0A0"/><rect x="57" y="339" width="1" height="1" fill="#A0A0A0"/><rect x="57" y="341" width="1" height="1" fill="#A0A0A0"/><rect x="57" y="343" width="1" height="1" fill="#A0A0A0"/><rect x="57" y="345" width="1" height="1" fill="#A0A0A0"/><rect x="57" y="347" width="1" height="1" fill="#A0A0A0"/><rect x="57" y="349" width="1" height="1" fill="#A0A0A0"/><rect x="57" y="351" width="1" height="1" fill="#A0A0A0"/><rect x="57" y="353" width="1" height="1" fill="#A0A0A0"/><rect x="57" y="355" width="1" height="1" fill="#A0A0A0"/><rect x="57" y="357" width="1" height="1" fill="#A0A0A0"/><rect x="57" y="359" width="1" height="1" fill="#A0A0A0"/><rect x="57" y="361" width="1" height="1" fill="#A0A0A0"/><rect x="57" y="363" width="1" height="1" fill="#A0A0A0"/><rect x="57" y="365" width="1" height="1" fill="#A0A0A0"/><rect x="57" y="367" width="1" height="1" fill="#A0A0A0"/><rect x="57" y="369" width="1" height="1" fill="#A0A0A0"/><rect x="57" y="371" width="1" height="1" fill="#A0A0A0"/><rect x="57" y="373" width="1" height="1" fill="#A0A0A0"/><rect x="57" y="375" width="1" height="1" fill="#A0A0A0"/><rect x="57" y="377" width="1" height="1" fill="#A0A0A0"/><rect x="57" y="379" width="1" height="1" fill="#A0A0A0"/><rect x="57" y="381" width="1" height="1" fill="#A0A0A0"/><rect x="57" y="383" width="1" height="1" fill="#A0A0A0"/><rect x="57" y="385" width="1" height="1" fill="#A0A0A0"/><rect x="57" y="387" width="1" height="1" fill="#A0A0A0"/><rect x="57" y="389" width="1" height="1" fill="#A0A0A0"/><rect x="57" y="391" width="1" height="1" fill="#A0A0A0"/><rect x="57" y="393" width="1" height="1" fill="#A0A0A0"/><rect x="57" y="395" width="1" height="1" fill="#A0A0A0"/><rect x="57" y="397" width="1" height="1" fill="#A0A0A0"/><rect x="57" y="399" width="1" height="1" fill="#A0A0A0"/><rect x="57" y="401" width="1" height="1" fill="#A0A0A0"/><rect x="57" y="403" width="1" height="1" fill="#A0A0A0"/><rect x="57" y="405" width="1" height="1" fill="#A0A0A0"/><rect x="57" y="407" width="1" height="1" fill="#A0A0A0"/><rect x="57" y="409" width="1" height="1" fill="#A0A0A0"/><rect x="57" y="411" width="1" height="1" fill="#A0A0A0"/><rect x="57" y="413" width="1" height="1" fill="#A0A0A0"/><rect x="57" y="415" width="1" height="1" fill="#A0A0A0"/><rect x="57" y="417" width="1" height="1" fill="#A0A0A0"/><rect x="57" y="419" width="1" height="1" fill="#A0A0A0"/><rect x="57" y="421" width="1" height="1" fill="#A0A0A0"/><rect x="57" y="423" width="1" height="1" fill="#A0A0A0"/><rect x="57" y="425" width="1" height="1" fill="#A0A0A0"/><rect x="57" y="427" width="1" height="1" fill="#A0A0A0"/><rect x="57" y="429" width="1" height="1" fill="#A0A0A0"/><rect x="57" y="431" width="1" height="1" fill="#A0A0A0"/><rect x="57" y="433" width="1" height="1" fill="#A0A0A0"/><rect x="57" y="435" width="1" height="1" fill="#A0A0A0"/><rect x="57" y="437" width="1" height="1" fill="#A0A0A0"/><rect x="57" y="439" width="1" height="1" fill="#A0A0A0"/><rect x="57" y="441" width="1" height="1" fill="#A0A0A0"/><rect x="57" y="443" width="1" height="1" fill="#A0A0A0"/><rect x="57" y="445" width="1" height="1" fill="#A0A0A0"/><rect x="57" y="447" width="1" height="1" fill="#A0A0A0"/><rect x="57" y="449" width="1" height="1" fill="#A0A0A0"/><rect x="57" y="451" width="1" height="1" fill="#A0A0A0"/><rect x="57" y="453" width="1" height="1" fill="#A0A0A0"/><rect x="57" y="455" width="1" height="1" fill="#A0A0A0"/><rect x="57" y="457" width="1" height="1" fill="#A0A0A0"/><rect x="57" y="459" width="1" height="1" fill="#A0A0A0"/><rect x="57" y="461" width="1" height="1" fill="#A0A0A0"/><rect x="57" y="463" width="1" height="1" fill="#A0A0A0"/><rect x="57" y="465" width="1" height="1" fill="#A0A0A0"/><rect x="57" y="467" width="1" height="1" fill="#A0A0A0"/><rect x="57" y="469" width="1" height="1" fill="#A0A0A0"/><rect x="57" y="471" width="1" height="1" fill="#A0A0A0"/><rect x="57" y="473" width="1" height="1" fill="#A0A0A0"/><rect x="57" y="475" width="1" height="1" fill="#A0A0A0"/><rect x="57" y="477" width="1" height="1" fill="#A0A0A0"/><rect x="57" y="479" width="1" height="1" fill="#A0A0A0"/><rect x="57" y="481" width="1" height="1" fill="#A0A0A0"/><rect x="57" y="483" width="1" height="1" fill="#A0A0A0"/><rect x="57" y="485" width="1" height="1" fill="#A0A0A0"/><rect x="57" y="487" width="1" height="1" fill="#A0A0A0"/><rect x="57" y="489" width="1" height="1" fill="#A0A0A0"/><rect x="57" y="491" width="1" height="1" fill="#A0A0A0"/><rect x="57" y="493" width="1" height="1" fill="#A0A0A0"/><rect x="57" y="495" width="1" height="1" fill="#A0A0A0"/><rect x="57" y="497" width="1" height="1" fill="#A0A0A0"/><rect x="57" y="499" width="1" height="1" fill="#A0A0A0"/><rect x="57" y="501" width="1" height="1" fill="#A0A0A0"/><rect x="57" y="503" width="1" height="1" fill="#A0A0A0"/><rect x="57" y="505" width="1" height="1" fill="#A0A0A0"/><rect x="57" y="507" width="1" height="1" fill="#A0A0A0"/><rect x="57" y="509" width="1" height="1" fill="#A0A0A0"/><rect x="57" y="511" width="1" height="1" fill="#A0A0A0"/><rect x="57" y="513" width="1" height="1" fill="#A0A0A0"/><rect x="57" y="515" width="1" height="1" fill="#A0A0A0"/><rect x="57" y="517" width="1" height="1" fill="#A0A0A0"/><rect x="57" y="519" width="1" height="1" fill="#A0A0A0"/><rect x="57" y="521" width="1" height="1" fill="#A0A0A0"/><rect x="57" y="523" width="1" height="1" fill="#A0A0A0"/><rect x="57" y="525" width="1" height="1" fill="#A0A0A0"/><rect x="57" y="527" width="1" height="1" fill="#A0A0A0"/><rect x="57" y="529" width="1" height="1" fill="#A0A0A0"/><rect x="57" y="531" width="1" height="1" fill="#A0A0A0"/><rect x="57" y="533" width="1" height="1" fill="#A0A0A0"/><rect x="57" y="535" width="1" height="1" fill="#A0A0A0"/><rect x="57" y="537" width="1" height="1" fill="#A0A0A0"/><rect x="57" y="539" width="1" height="1" fill="#A0A0A0"/><g transform="translate(15,61)"><rect x="0.5" y="0.5" width="8" height="8" rx="1.2" fill="url(#gbox)" stroke="#8E8E8E"/><rect x="2" y="4" width="5" height="1" fill="#23449A"/></g><g transform="translate(33,57)"><path d="M2 1.5 L3 0.5 L6 4 V14 L2 10.5 Z" fill="#F3F5FB" stroke="#92A2CF" stroke-width="0.9"/><path d="M6.3 14 V4.8 L11.8 2.6 V10.8 Z" fill="#EDF0F8" stroke="#6F84B8" stroke-width="0.9"/><path d="M0.8 2.2 V10.6" stroke="#8C8ADA" stroke-width="1.5"/><path d="M0.9 10.4 L5.2 14.4" stroke="#2B3162" stroke-width="1.4"/><path d="M5 14.5 H14.6 V5.6 L12.3 4.4" fill="none" stroke="#8280D0" stroke-width="1.3"/><path d="M5.5 14.6 H8" stroke="#2B3162" stroke-width="1.2"/></g><g transform="translate(34,77)"><rect x="0.5" y="0.5" width="8" height="8" rx="1.2" fill="url(#gbox)" stroke="#8E8E8E"/><rect x="2" y="4" width="5" height="1" fill="#23449A"/></g><g transform="translate(52,73)"><path d="M2 1.5 L3 0.5 L6 4 V14 L2 10.5 Z" fill="#F3F5FB" stroke="#92A2CF" stroke-width="0.9"/><path d="M6.3 14 V4.8 L11.8 2.6 V10.8 Z" fill="#EDF0F8" stroke="#6F84B8" stroke-width="0.9"/><path d="M0.8 2.2 V10.6" stroke="#8C8ADA" stroke-width="1.5"/><path d="M0.9 10.4 L5.2 14.4" stroke="#2B3162" stroke-width="1.4"/><path d="M5 14.5 H14.6 V5.6 L12.3 4.4" fill="none" stroke="#8280D0" stroke-width="1.3"/><path d="M5.5 14.6 H8" stroke="#2B3162" stroke-width="1.2"/></g><g transform="translate(53,93)"><rect x="0.5" y="0.5" width="8" height="8" rx="1.2" fill="url(#gbox)" stroke="#8E8E8E"/><rect x="2" y="4" width="5" height="1" fill="#23449A"/></g><g transform="translate(71,89)"><path d="M2 1.5 L3 0.5 L6 4 V14 L2 10.5 Z" fill="#F3F5FB" stroke="#92A2CF" stroke-width="0.9"/><path d="M6.3 14 V4.8 L11.8 2.6 V10.8 Z" fill="#EDF0F8" stroke="#6F84B8" stroke-width="0.9"/><path d="M0.8 2.2 V10.6" stroke="#8C8ADA" stroke-width="1.5"/><path d="M0.9 10.4 L5.2 14.4" stroke="#2B3162" stroke-width="1.4"/><path d="M5 14.5 H14.6 V5.6 L12.3 4.4" fill="none" stroke="#8280D0" stroke-width="1.3"/><path d="M5.5 14.6 H8" stroke="#2B3162" stroke-width="1.2"/></g><g transform="translate(91,106)"><path d="M0.8 0.8 H8 L10.5 3.3 V13 H0.8 Z" fill="url(#gdoc)" stroke="#A6B5D2" stroke-width="1"/><path d="M1 13.4 H10.9 V3.5" fill="none" stroke="#2E3E5E" stroke-width="1.3"/><path d="M7.6 0.3 L11.2 3.9 L7.6 3.9 Z" fill="#34456A"/><rect x="8.4" y="1.6" width="1.3" height="1.3" fill="#E8EEF8"/></g><g transform="translate(91,122)"><path d="M0.8 0.8 H8 L10.5 3.3 V13 H0.8 Z" fill="url(#gdoc)" stroke="#A6B5D2" stroke-width="1"/><path d="M1 13.4 H10.9 V3.5" fill="none" stroke="#2E3E5E" stroke-width="1.3"/><path d="M7.6 0.3 L11.2 3.9 L7.6 3.9 Z" fill="#34456A"/><rect x="8.4" y="1.6" width="1.3" height="1.3" fill="#E8EEF8"/></g><g transform="translate(91,138)"><path d="M0.8 0.8 H8 L10.5 3.3 V13 H0.8 Z" fill="url(#gdoc)" stroke="#A6B5D2" stroke-width="1"/><path d="M1 13.4 H10.9 V3.5" fill="none" stroke="#2E3E5E" stroke-width="1.3"/><path d="M7.6 0.3 L11.2 3.9 L7.6 3.9 Z" fill="#34456A"/><rect x="8.4" y="1.6" width="1.3" height="1.3" fill="#E8EEF8"/></g><g transform="translate(91,154)"><path d="M0.8 0.8 H8 L10.5 3.3 V13 H0.8 Z" fill="url(#gdoc)" stroke="#A6B5D2" stroke-width="1"/><path d="M1 13.4 H10.9 V3.5" fill="none" stroke="#2E3E5E" stroke-width="1.3"/><path d="M7.6 0.3 L11.2 3.9 L7.6 3.9 Z" fill="#34456A"/><rect x="8.4" y="1.6" width="1.3" height="1.3" fill="#E8EEF8"/></g><g transform="translate(91,170)"><path d="M0.8 0.8 H8 L10.5 3.3 V13 H0.8 Z" fill="url(#gdoc)" stroke="#A6B5D2" stroke-width="1"/><path d="M1 13.4 H10.9 V3.5" fill="none" stroke="#2E3E5E" stroke-width="1.3"/><path d="M7.6 0.3 L11.2 3.9 L7.6 3.9 Z" fill="#34456A"/><rect x="8.4" y="1.6" width="1.3" height="1.3" fill="#E8EEF8"/></g><g transform="translate(91,186)"><path d="M0.8 0.8 H8 L10.5 3.3 V13 H0.8 Z" fill="url(#gdoc)" stroke="#A6B5D2" stroke-width="1"/><path d="M1 13.4 H10.9 V3.5" fill="none" stroke="#2E3E5E" stroke-width="1.3"/><path d="M7.6 0.3 L11.2 3.9 L7.6 3.9 Z" fill="#34456A"/><rect x="8.4" y="1.6" width="1.3" height="1.3" fill="#E8EEF8"/></g><g transform="translate(91,202)"><path d="M0.8 0.8 H8 L10.5 3.3 V13 H0.8 Z" fill="url(#gdoc)" stroke="#A6B5D2" stroke-width="1"/><path d="M1 13.4 H10.9 V3.5" fill="none" stroke="#2E3E5E" stroke-width="1.3"/><path d="M7.6 0.3 L11.2 3.9 L7.6 3.9 Z" fill="#34456A"/><rect x="8.4" y="1.6" width="1.3" height="1.3" fill="#E8EEF8"/></g><g transform="translate(91,218)"><path d="M0.8 0.8 H8 L10.5 3.3 V13 H0.8 Z" fill="url(#gdoc)" stroke="#A6B5D2" stroke-width="1"/><path d="M1 13.4 H10.9 V3.5" fill="none" stroke="#2E3E5E" stroke-width="1.3"/><path d="M7.6 0.3 L11.2 3.9 L7.6 3.9 Z" fill="#34456A"/><rect x="8.4" y="1.6" width="1.3" height="1.3" fill="#E8EEF8"/></g><g transform="translate(91,234)"><path d="M0.8 0.8 H8 L10.5 3.3 V13 H0.8 Z" fill="url(#gdoc)" stroke="#A6B5D2" stroke-width="1"/><path d="M1 13.4 H10.9 V3.5" fill="none" stroke="#2E3E5E" stroke-width="1.3"/><path d="M7.6 0.3 L11.2 3.9 L7.6 3.9 Z" fill="#34456A"/><rect x="8.4" y="1.6" width="1.3" height="1.3" fill="#E8EEF8"/></g><g transform="translate(91,250)"><path d="M0.8 0.8 H8 L10.5 3.3 V13 H0.8 Z" fill="url(#gdoc)" stroke="#A6B5D2" stroke-width="1"/><path d="M1 13.4 H10.9 V3.5" fill="none" stroke="#2E3E5E" stroke-width="1.3"/><path d="M7.6 0.3 L11.2 3.9 L7.6 3.9 Z" fill="#34456A"/><rect x="8.4" y="1.6" width="1.3" height="1.3" fill="#E8EEF8"/></g><g transform="translate(91,266)"><path d="M0.8 0.8 H8 L10.5 3.3 V13 H0.8 Z" fill="url(#gdoc)" stroke="#A6B5D2" stroke-width="1"/><path d="M1 13.4 H10.9 V3.5" fill="none" stroke="#2E3E5E" stroke-width="1.3"/><path d="M7.6 0.3 L11.2 3.9 L7.6 3.9 Z" fill="#34456A"/><rect x="8.4" y="1.6" width="1.3" height="1.3" fill="#E8EEF8"/></g><g transform="translate(53,285)"><rect x="0.5" y="0.5" width="8" height="8" rx="1.2" fill="url(#gbox)" stroke="#8E8E8E"/><rect x="2" y="4" width="5" height="1" fill="#23449A"/><rect x="4" y="2" width="1" height="5" fill="#23449A"/></g><g transform="translate(71,282)"><rect x="0.5" y="0.5" width="13" height="13" fill="url(#gbook)" stroke="#6B6FC0" stroke-width="1"/><rect x="2" y="1" width="1" height="12" fill="#9A9CD8"/><path d="M1 13.5 H13.5 V1" stroke="#2E2E70" stroke-width="1.2" fill="none"/><path d="M12.5 1 V13" stroke="#fff" stroke-width="1"/><path d="M0.8 12 L2.5 14.5 H13.8 V2" fill="none" stroke="#303070" stroke-width="1"/><rect x="2" y="12" width="10" height="1" fill="#8FA0C0"/></g><g transform="translate(53,301)"><rect x="0.5" y="0.5" width="8" height="8" rx="1.2" fill="url(#gbox)" stroke="#8E8E8E"/><rect x="2" y="4" width="5" height="1" fill="#23449A"/><rect x="4" y="2" width="1" height="5" fill="#23449A"/></g><g transform="translate(71,298)"><rect x="0.5" y="0.5" width="13" height="13" fill="url(#gbook)" stroke="#6B6FC0" stroke-width="1"/><rect x="2" y="1" width="1" height="12" fill="#9A9CD8"/><path d="M1 13.5 H13.5 V1" stroke="#2E2E70" stroke-width="1.2" fill="none"/><path d="M12.5 1 V13" stroke="#fff" stroke-width="1"/><path d="M0.8 12 L2.5 14.5 H13.8 V2" fill="none" stroke="#303070" stroke-width="1"/><rect x="2" y="12" width="10" height="1" fill="#8FA0C0"/></g><g transform="translate(53,317)"><rect x="0.5" y="0.5" width="8" height="8" rx="1.2" fill="url(#gbox)" stroke="#8E8E8E"/><rect x="2" y="4" width="5" height="1" fill="#23449A"/><rect x="4" y="2" width="1" height="5" fill="#23449A"/></g><g transform="translate(71,314)"><rect x="0.5" y="0.5" width="13" height="13" fill="url(#gbook)" stroke="#6B6FC0" stroke-width="1"/><rect x="2" y="1" width="1" height="12" fill="#9A9CD8"/><path d="M1 13.5 H13.5 V1" stroke="#2E2E70" stroke-width="1.2" fill="none"/><path d="M12.5 1 V13" stroke="#fff" stroke-width="1"/><path d="M0.8 12 L2.5 14.5 H13.8 V2" fill="none" stroke="#303070" stroke-width="1"/><rect x="2" y="12" width="10" height="1" fill="#8FA0C0"/></g><g transform="translate(53,333)"><rect x="0.5" y="0.5" width="8" height="8" rx="1.2" fill="url(#gbox)" stroke="#8E8E8E"/><rect x="2" y="4" width="5" height="1" fill="#23449A"/><rect x="4" y="2" width="1" height="5" fill="#23449A"/></g><g transform="translate(71,330)"><rect x="0.5" y="0.5" width="13" height="13" fill="url(#gbook)" stroke="#6B6FC0" stroke-width="1"/><rect x="2" y="1" width="1" height="12" fill="#9A9CD8"/><path d="M1 13.5 H13.5 V1" stroke="#2E2E70" stroke-width="1.2" fill="none"/><path d="M12.5 1 V13" stroke="#fff" stroke-width="1"/><path d="M0.8 12 L2.5 14.5 H13.8 V2" fill="none" stroke="#303070" stroke-width="1"/><rect x="2" y="12" width="10" height="1" fill="#8FA0C0"/></g><g transform="translate(53,349)"><rect x="0.5" y="0.5" width="8" height="8" rx="1.2" fill="url(#gbox)" stroke="#8E8E8E"/><rect x="2" y="4" width="5" height="1" fill="#23449A"/><rect x="4" y="2" width="1" height="5" fill="#23449A"/></g><g transform="translate(71,346)"><rect x="0.5" y="0.5" width="13" height="13" fill="url(#gbook)" stroke="#6B6FC0" stroke-width="1"/><rect x="2" y="1" width="1" height="12" fill="#9A9CD8"/><path d="M1 13.5 H13.5 V1" stroke="#2E2E70" stroke-width="1.2" fill="none"/><path d="M12.5 1 V13" stroke="#fff" stroke-width="1"/><path d="M0.8 12 L2.5 14.5 H13.8 V2" fill="none" stroke="#303070" stroke-width="1"/><rect x="2" y="12" width="10" height="1" fill="#8FA0C0"/></g><g transform="translate(53,365)"><rect x="0.5" y="0.5" width="8" height="8" rx="1.2" fill="url(#gbox)" stroke="#8E8E8E"/><rect x="2" y="4" width="5" height="1" fill="#23449A"/><rect x="4" y="2" width="1" height="5" fill="#23449A"/></g><g transform="translate(71,362)"><rect x="0.5" y="0.5" width="13" height="13" fill="url(#gbook)" stroke="#6B6FC0" stroke-width="1"/><rect x="2" y="1" width="1" height="12" fill="#9A9CD8"/><path d="M1 13.5 H13.5 V1" stroke="#2E2E70" stroke-width="1.2" fill="none"/><path d="M12.5 1 V13" stroke="#fff" stroke-width="1"/><path d="M0.8 12 L2.5 14.5 H13.8 V2" fill="none" stroke="#303070" stroke-width="1"/><rect x="2" y="12" width="10" height="1" fill="#8FA0C0"/></g><g transform="translate(53,381)"><rect x="0.5" y="0.5" width="8" height="8" rx="1.2" fill="url(#gbox)" stroke="#8E8E8E"/><rect x="2" y="4" width="5" height="1" fill="#23449A"/><rect x="4" y="2" width="1" height="5" fill="#23449A"/></g><g transform="translate(71,378)"><rect x="0.5" y="0.5" width="13" height="13" fill="url(#gbook)" stroke="#6B6FC0" stroke-width="1"/><rect x="2" y="1" width="1" height="12" fill="#9A9CD8"/><path d="M1 13.5 H13.5 V1" stroke="#2E2E70" stroke-width="1.2" fill="none"/><path d="M12.5 1 V13" stroke="#fff" stroke-width="1"/><path d="M0.8 12 L2.5 14.5 H13.8 V2" fill="none" stroke="#303070" stroke-width="1"/><rect x="2" y="12" width="10" height="1" fill="#8FA0C0"/></g><g transform="translate(53,397)"><rect x="0.5" y="0.5" width="8" height="8" rx="1.2" fill="url(#gbox)" stroke="#8E8E8E"/><rect x="2" y="4" width="5" height="1" fill="#23449A"/><rect x="4" y="2" width="1" height="5" fill="#23449A"/></g><g transform="translate(71,394)"><rect x="0.5" y="0.5" width="13" height="13" fill="url(#gbook)" stroke="#6B6FC0" stroke-width="1"/><rect x="2" y="1" width="1" height="12" fill="#9A9CD8"/><path d="M1 13.5 H13.5 V1" stroke="#2E2E70" stroke-width="1.2" fill="none"/><path d="M12.5 1 V13" stroke="#fff" stroke-width="1"/><path d="M0.8 12 L2.5 14.5 H13.8 V2" fill="none" stroke="#303070" stroke-width="1"/><rect x="2" y="12" width="10" height="1" fill="#8FA0C0"/></g><g transform="translate(53,413)"><rect x="0.5" y="0.5" width="8" height="8" rx="1.2" fill="url(#gbox)" stroke="#8E8E8E"/><rect x="2" y="4" width="5" height="1" fill="#23449A"/><rect x="4" y="2" width="1" height="5" fill="#23449A"/></g><g transform="translate(71,410)"><rect x="0.5" y="0.5" width="13" height="13" fill="url(#gbook)" stroke="#6B6FC0" stroke-width="1"/><rect x="2" y="1" width="1" height="12" fill="#9A9CD8"/><path d="M1 13.5 H13.5 V1" stroke="#2E2E70" stroke-width="1.2" fill="none"/><path d="M12.5 1 V13" stroke="#fff" stroke-width="1"/><path d="M0.8 12 L2.5 14.5 H13.8 V2" fill="none" stroke="#303070" stroke-width="1"/><rect x="2" y="12" width="10" height="1" fill="#8FA0C0"/></g><g transform="translate(53,429)"><rect x="0.5" y="0.5" width="8" height="8" rx="1.2" fill="url(#gbox)" stroke="#8E8E8E"/><rect x="2" y="4" width="5" height="1" fill="#23449A"/><rect x="4" y="2" width="1" height="5" fill="#23449A"/></g><g transform="translate(71,426)"><rect x="0.5" y="0.5" width="13" height="13" fill="url(#gbook)" stroke="#6B6FC0" stroke-width="1"/><rect x="2" y="1" width="1" height="12" fill="#9A9CD8"/><path d="M1 13.5 H13.5 V1" stroke="#2E2E70" stroke-width="1.2" fill="none"/><path d="M12.5 1 V13" stroke="#fff" stroke-width="1"/><path d="M0.8 12 L2.5 14.5 H13.8 V2" fill="none" stroke="#303070" stroke-width="1"/><rect x="2" y="12" width="10" height="1" fill="#8FA0C0"/></g><g transform="translate(53,445)"><rect x="0.5" y="0.5" width="8" height="8" rx="1.2" fill="url(#gbox)" stroke="#8E8E8E"/><rect x="2" y="4" width="5" height="1" fill="#23449A"/><rect x="4" y="2" width="1" height="5" fill="#23449A"/></g><g transform="translate(71,442)"><rect x="0.5" y="0.5" width="13" height="13" fill="url(#gbook)" stroke="#6B6FC0" stroke-width="1"/><rect x="2" y="1" width="1" height="12" fill="#9A9CD8"/><path d="M1 13.5 H13.5 V1" stroke="#2E2E70" stroke-width="1.2" fill="none"/><path d="M12.5 1 V13" stroke="#fff" stroke-width="1"/><path d="M0.8 12 L2.5 14.5 H13.8 V2" fill="none" stroke="#303070" stroke-width="1"/><rect x="2" y="12" width="10" height="1" fill="#8FA0C0"/></g><g transform="translate(53,461)"><rect x="0.5" y="0.5" width="8" height="8" rx="1.2" fill="url(#gbox)" stroke="#8E8E8E"/><rect x="2" y="4" width="5" height="1" fill="#23449A"/><rect x="4" y="2" width="1" height="5" fill="#23449A"/></g><g transform="translate(71,458)"><rect x="0.5" y="0.5" width="13" height="13" fill="url(#gbook)" stroke="#6B6FC0" stroke-width="1"/><rect x="2" y="1" width="1" height="12" fill="#9A9CD8"/><path d="M1 13.5 H13.5 V1" stroke="#2E2E70" stroke-width="1.2" fill="none"/><path d="M12.5 1 V13" stroke="#fff" stroke-width="1"/><path d="M0.8 12 L2.5 14.5 H13.8 V2" fill="none" stroke="#303070" stroke-width="1"/><rect x="2" y="12" width="10" height="1" fill="#8FA0C0"/></g><g transform="translate(53,477)"><rect x="0.5" y="0.5" width="8" height="8" rx="1.2" fill="url(#gbox)" stroke="#8E8E8E"/><rect x="2" y="4" width="5" height="1" fill="#23449A"/><rect x="4" y="2" width="1" height="5" fill="#23449A"/></g><g transform="translate(71,474)"><rect x="0.5" y="0.5" width="13" height="13" fill="url(#gbook)" stroke="#6B6FC0" stroke-width="1"/><rect x="2" y="1" width="1" height="12" fill="#9A9CD8"/><path d="M1 13.5 H13.5 V1" stroke="#2E2E70" stroke-width="1.2" fill="none"/><path d="M12.5 1 V13" stroke="#fff" stroke-width="1"/><path d="M0.8 12 L2.5 14.5 H13.8 V2" fill="none" stroke="#303070" stroke-width="1"/><rect x="2" y="12" width="10" height="1" fill="#8FA0C0"/></g><g transform="translate(53,493)"><rect x="0.5" y="0.5" width="8" height="8" rx="1.2" fill="url(#gbox)" stroke="#8E8E8E"/><rect x="2" y="4" width="5" height="1" fill="#23449A"/><rect x="4" y="2" width="1" height="5" fill="#23449A"/></g><g transform="translate(71,490)"><rect x="0.5" y="0.5" width="13" height="13" fill="url(#gbook)" stroke="#6B6FC0" stroke-width="1"/><rect x="2" y="1" width="1" height="12" fill="#9A9CD8"/><path d="M1 13.5 H13.5 V1" stroke="#2E2E70" stroke-width="1.2" fill="none"/><path d="M12.5 1 V13" stroke="#fff" stroke-width="1"/><path d="M0.8 12 L2.5 14.5 H13.8 V2" fill="none" stroke="#303070" stroke-width="1"/><rect x="2" y="12" width="10" height="1" fill="#8FA0C0"/></g><g transform="translate(53,509)"><rect x="0.5" y="0.5" width="8" height="8" rx="1.2" fill="url(#gbox)" stroke="#8E8E8E"/><rect x="2" y="4" width="5" height="1" fill="#23449A"/><rect x="4" y="2" width="1" height="5" fill="#23449A"/></g><g transform="translate(71,506)"><rect x="0.5" y="0.5" width="13" height="13" fill="url(#gbook)" stroke="#6B6FC0" stroke-width="1"/><rect x="2" y="1" width="1" height="12" fill="#9A9CD8"/><path d="M1 13.5 H13.5 V1" stroke="#2E2E70" stroke-width="1.2" fill="none"/><path d="M12.5 1 V13" stroke="#fff" stroke-width="1"/><path d="M0.8 12 L2.5 14.5 H13.8 V2" fill="none" stroke="#303070" stroke-width="1"/><rect x="2" y="12" width="10" height="1" fill="#8FA0C0"/></g><g transform="translate(53,525)"><rect x="0.5" y="0.5" width="8" height="8" rx="1.2" fill="url(#gbox)" stroke="#8E8E8E"/><rect x="2" y="4" width="5" height="1" fill="#23449A"/><rect x="4" y="2" width="1" height="5" fill="#23449A"/></g><g transform="translate(71,522)"><rect x="0.5" y="0.5" width="13" height="13" fill="url(#gbook)" stroke="#6B6FC0" stroke-width="1"/><rect x="2" y="1" width="1" height="12" fill="#9A9CD8"/><path d="M1 13.5 H13.5 V1" stroke="#2E2E70" stroke-width="1.2" fill="none"/><path d="M12.5 1 V13" stroke="#fff" stroke-width="1"/><path d="M0.8 12 L2.5 14.5 H13.8 V2" fill="none" stroke="#303070" stroke-width="1"/><rect x="2" y="12" width="10" height="1" fill="#8FA0C0"/></g><g transform="translate(53,541)"><rect x="0.5" y="0.5" width="8" height="8" rx="1.2" fill="url(#gbox)" stroke="#8E8E8E"/><rect x="2" y="4" width="5" height="1" fill="#23449A"/><rect x="4" y="2" width="1" height="5" fill="#23449A"/></g><g transform="translate(71,538)"><rect x="0.5" y="0.5" width="13" height="13" fill="url(#gbook)" stroke="#6B6FC0" stroke-width="1"/><rect x="2" y="1" width="1" height="12" fill="#9A9CD8"/><path d="M1 13.5 H13.5 V1" stroke="#2E2E70" stroke-width="1.2" fill="none"/><path d="M12.5 1 V13" stroke="#fff" stroke-width="1"/><path d="M0.8 12 L2.5 14.5 H13.8 V2" fill="none" stroke="#303070" stroke-width="1"/><rect x="2" y="12" width="10" height="1" fill="#8FA0C0"/></g></svg>
<div style="position:absolute;left:106px;top:105px;width:109px;height:16px;background:#C4D1DF"></div>
<div class="t" style="left:51px;top:59.69px;font-size:11px;line-height:11px;color:#000;letter-spacing:0px;max-width:275px;overflow:hidden;">Somed Export Anlagen (2.5)</div>
<div class="t" style="left:70px;top:75.69px;font-size:11px;line-height:11px;color:#000;letter-spacing:0px;max-width:256px;overflow:hidden;">200_400 - Total Anlagenwert/-nutzung</div>
<div class="t" style="left:89px;top:91.69px;font-size:11px;line-height:11px;color:#000;letter-spacing:0px;max-width:237px;overflow:hidden;">10 - Gebäude</div>
<div class="t" style="left:108px;top:107.69px;font-size:11px;line-height:11px;color:#000;letter-spacing:0px;max-width:218px;overflow:hidden;">010-000 - Immobilien</div>
<div class="t" style="left:108px;top:123.69px;font-size:11px;line-height:11px;color:#000;letter-spacing:0px;max-width:218px;overflow:hidden;">010-026 - Audioanlage</div>
<div class="t" style="left:108px;top:139.69px;font-size:11px;line-height:11px;color:#000;letter-spacing:0px;max-width:218px;overflow:hidden;">010-017 - Parkanlage 045</div>
<div class="t" style="left:108px;top:155.69px;font-size:11px;line-height:11px;color:#000;letter-spacing:0px;max-width:218px;overflow:hidden;">010-013 - Telefonanlage</div>
<div class="t" style="left:108px;top:171.69px;font-size:11px;line-height:11px;color:#000;letter-spacing:0px;max-width:218px;overflow:hidden;">010-011 - Spannteppiche</div>
<div class="t" style="left:108px;top:187.69px;font-size:11px;line-height:11px;color:#000;letter-spacing:0px;max-width:218px;overflow:hidden;">010-006 - Geländer</div>
<div class="t" style="left:108px;top:203.69px;font-size:11px;line-height:11px;color:#000;letter-spacing:0px;max-width:218px;overflow:hidden;">010-004 - Sitzplatz nördlich 036</div>
<div class="t" style="left:108px;top:219.69px;font-size:11px;line-height:11px;color:#000;letter-spacing:0px;max-width:218px;overflow:hidden;">010-003 - Kinderspielgeräte 036</div>
<div class="t" style="left:108px;top:235.69px;font-size:11px;line-height:11px;color:#000;letter-spacing:0px;max-width:218px;overflow:hidden;">010-002 - Feuerstelle 036</div>
<div class="t" style="left:108px;top:251.69px;font-size:11px;line-height:11px;color:#000;letter-spacing:0px;max-width:218px;overflow:hidden;">010-001 - Gebäude AWH/Garage</div>
<div class="t" style="left:108px;top:267.69px;font-size:11px;line-height:11px;color:#000;letter-spacing:0px;max-width:218px;overflow:hidden;">1105.002 - Erneuerung Elektroschrank Heizsystem</div>
<div class="t" style="left:89px;top:283.69px;font-size:11px;line-height:11px;color:#000;letter-spacing:0px;max-width:237px;overflow:hidden;">11 - Energie</div>
<div class="t" style="left:89px;top:299.69px;font-size:11px;line-height:11px;color:#000;letter-spacing:0px;max-width:237px;overflow:hidden;">20 - Techn. Dienste</div>
<div class="t" style="left:89px;top:315.69px;font-size:11px;line-height:11px;color:#000;letter-spacing:0px;max-width:237px;overflow:hidden;">21 - Transportdienst</div>
<div class="t" style="left:89px;top:331.69px;font-size:11px;line-height:11px;color:#000;letter-spacing:0px;max-width:237px;overflow:hidden;">30 - Leitung u. Verwaltung</div>
<div class="t" style="left:89px;top:347.69px;font-size:11px;line-height:11px;color:#000;letter-spacing:0px;max-width:237px;overflow:hidden;">40 - Hauswirtschaft</div>
<div class="t" style="left:89px;top:363.69px;font-size:11px;line-height:11px;color:#000;letter-spacing:0px;max-width:237px;overflow:hidden;">41 - Wäscherei</div>
<div class="t" style="left:89px;top:379.69px;font-size:11px;line-height:11px;color:#000;letter-spacing:0px;max-width:237px;overflow:hidden;">42 - Reinigung</div>
<div class="t" style="left:89px;top:395.69px;font-size:11px;line-height:11px;color:#000;letter-spacing:0px;max-width:237px;overflow:hidden;">60 - Verpflegungsdienst</div>
<div class="t" style="left:89px;top:411.69px;font-size:11px;line-height:11px;color:#000;letter-spacing:0px;max-width:237px;overflow:hidden;">90 - Zentrallager</div>
<div class="t" style="left:89px;top:427.69px;font-size:11px;line-height:11px;color:#000;letter-spacing:0px;max-width:237px;overflow:hidden;">95 - Apotheke</div>
<div class="t" style="left:89px;top:443.69px;font-size:11px;line-height:11px;color:#000;letter-spacing:0px;max-width:237px;overflow:hidden;">100 - Pension</div>
<div class="t" style="left:89px;top:459.69px;font-size:11px;line-height:11px;color:#000;letter-spacing:0px;max-width:237px;overflow:hidden;">110 - Pflege</div>
<div class="t" style="left:89px;top:475.69px;font-size:11px;line-height:11px;color:#000;letter-spacing:0px;max-width:237px;overflow:hidden;">130 - Physiotherapie</div>
<div class="t" style="left:89px;top:491.69px;font-size:11px;line-height:11px;color:#000;letter-spacing:0px;max-width:237px;overflow:hidden;">131 - Ergotherapie</div>
<div class="t" style="left:89px;top:507.69px;font-size:11px;line-height:11px;color:#000;letter-spacing:0px;max-width:237px;overflow:hidden;">140 - Arztdienst</div>
<div class="t" style="left:89px;top:523.69px;font-size:11px;line-height:11px;color:#000;letter-spacing:0px;max-width:237px;overflow:hidden;">150 - Material gemäss MiGeL</div>
<div class="t" style="left:89px;top:539.69px;font-size:11px;line-height:11px;color:#000;letter-spacing:0px;max-width:237px;overflow:hidden;">151 - Medikamente gemäss SL</div>
<div style="position:absolute;left:331px;top:50px;width:977px;height:491px;background:#D9E8FB;border:1px solid #5E6166;box-shadow:0 4px 22px 1px rgba(20,40,75,0.24), 4px 4px 8px 0 rgba(20,40,75,0.22);"></div>
<div style="position:absolute;left:332px;top:51px;width:975px;height:30px;background:#fff"></div>
<div class="t" style="left:340px;top:59.84px;font-size:12px;line-height:12px;color:#000;letter-spacing:0px;">Abgang</div>
<svg style="position:absolute;left:1287px;top:60px" width="10" height="10" viewBox="0 0 10 10"><path d="M0 0 L10 10 M10 0 L0 10" stroke="#111" stroke-width="1.1"/></svg>
<div style="position:absolute;left:338px;top:93px;width:963px;height:283px;border:1px solid #BAC2CC;border-radius:4px;"></div>
<div style="position:absolute;left:345px;top:91px;width:50px;height:5px;background:#D9E8FB"></div>
<div class="t" style="left:349px;top:88.19px;font-size:11px;line-height:11px;color:#000;letter-spacing:-0.25px;">Buchung</div>
<div style="position:absolute;left:467px;top:137px;width:271px;height:227px;border:1px solid #BAC2CC;border-radius:4px;"></div>
<div style="position:absolute;left:474px;top:135px;width:48px;height:5px;background:#D9E8FB"></div>
<div class="t" style="left:478px;top:132.19px;font-size:11px;line-height:11px;color:#000;letter-spacing:-0.25px;">Bilanziell</div>
<div style="position:absolute;left:744px;top:137px;width:270px;height:227px;border:1px solid #BAC2CC;border-radius:4px;"></div>
<div style="position:absolute;left:751px;top:135px;width:73px;height:5px;background:#D9E8FB"></div>
<div class="t" style="left:755px;top:132.19px;font-size:11px;line-height:11px;color:#000;letter-spacing:-0.25px;">Kalkulatorisch</div>
<div style="position:absolute;left:1022px;top:137px;width:271px;height:227px;border:1px solid #BAC2CC;border-radius:4px;"></div>
<div style="position:absolute;left:1029px;top:135px;width:54px;height:5px;background:#D9E8FB"></div>
<div class="t" style="left:1033px;top:132.19px;font-size:11px;line-height:11px;color:#000;letter-spacing:-0.25px;">Individuell</div>
<div style="position:absolute;left:338px;top:388px;width:963px;height:112px;border:1px solid #BAC2CC;border-radius:4px;"></div>
<div style="position:absolute;left:345px;top:386px;width:149px;height:5px;background:#D9E8FB"></div>
<div class="t" style="left:349px;top:383.19px;font-size:11px;line-height:11px;color:#000;letter-spacing:-0.25px;">Buchungsvorschau - Bilanziell</div>
<div class="t" style="left:347px;top:109.69px;font-size:11px;line-height:11px;color:#000;letter-spacing:-0.3px;">Datum</div>
<div style="position:absolute;left:477px;top:104px;width:79px;height:20px;background:#fff;border:1px solid #7F9DB9;border-right:none;"></div>
<div style="position:absolute;left:555px;top:104px;width:14px;height:20px;background:linear-gradient(to bottom,#FFF6DA,#FFE6A6);border:1px solid #E5C365;"></div>
<svg style="position:absolute;left:558px;top:111px" width="7" height="5" viewBox="0 0 7 5"><path d="M0.5 0.5 H6.5 L3.5 3.8 Z" fill="#4B5A7C"/></svg>
<div style="position:absolute;left:480px;top:107px;width:12px;height:14px;background:#0A6CD8"></div>
<div class="t" style="left:481px;top:108.69px;font-size:11px;line-height:11px;color:#000;letter-spacing:0.15px;"><span style="color:#fff">15</span>.06.2021</div>
<svg style="position:absolute;left:575px;top:107px" width="12" height="12" viewBox="0 0 12 12"><defs><radialGradient id="gradio" cx="0.4" cy="0.35" r="0.7"><stop offset="0" stop-color="#FFFFFF"/><stop offset="1" stop-color="#DCDEE4"/></radialGradient></defs><circle cx="6" cy="6" r="5.5" fill="url(#gradio)" stroke="#E5C067" stroke-width="1"/><circle cx="6" cy="6" r="2.7" fill="#0E5CB0"/></svg>
<div class="t" style="left:592px;top:109.69px;font-size:11px;line-height:11px;color:#000;letter-spacing:-0.25px;">Vollabgang</div>
<svg style="position:absolute;left:685px;top:107px" width="12" height="12" viewBox="0 0 12 12"><defs><radialGradient id="gradio" cx="0.4" cy="0.35" r="0.7"><stop offset="0" stop-color="#FFFFFF"/><stop offset="1" stop-color="#DCDEE4"/></radialGradient></defs><circle cx="6" cy="6" r="5.5" fill="url(#gradio)" stroke="#E5C067" stroke-width="1"/></svg>
<div class="t" style="left:703px;top:109.69px;font-size:11px;line-height:11px;color:#000;letter-spacing:-0.15px;">Teilabgang</div>
<div class="t" style="left:347px;top:154.69px;font-size:11px;line-height:11px;color:#000;letter-spacing:-0.12px;">Beleg</div>
<div class="t" style="left:347px;top:177.69px;font-size:11px;line-height:11px;color:#000;letter-spacing:-0.12px;">Text</div>
<div class="t" style="left:347px;top:200.69px;font-size:11px;line-height:11px;color:#000;letter-spacing:-0.12px;">Abschreibung lfd. Jahr</div>
<div class="t" style="left:347px;top:223.69px;font-size:11px;line-height:11px;color:#000;letter-spacing:-0.12px;">aktueller Buchwert</div>
<div class="t" style="left:347px;top:246.69px;font-size:11px;line-height:11px;color:#000;letter-spacing:-0.12px;">Abgang AHK</div>
<div class="t" style="left:347px;top:269.69px;font-size:11px;line-height:11px;color:#000;letter-spacing:-0.12px;">Abgang kum. Abschr.</div>
<div class="t" style="left:347px;top:292.69px;font-size:11px;line-height:11px;color:#000;letter-spacing:-0.12px;">Liquidationserlös</div>
<div class="t" style="left:347px;top:315.69px;font-size:11px;line-height:11px;color:#000;letter-spacing:-0.12px;">Projekt</div>
<div class="t" style="left:347px;top:338.69px;font-size:11px;line-height:11px;color:#000;letter-spacing:-0.12px;">Buchgewinn/-Verlust</div>
<div style="position:absolute;left:477px;top:150px;width:66px;height:20px;background:#fff;border:1px solid #7A8699;"></div>
<div class="t" style="left:477px;top:154.69px;font-size:11px;line-height:11px;color:#000;letter-spacing:-0.15px;width:64px;text-align:right;">100'166</div>
<div style="position:absolute;left:477px;top:173px;width:252px;height:20px;background:#fff;border:1px solid #7A8699;"></div>
<div class="t" style="left:481px;top:177.69px;font-size:11px;line-height:11px;color:#000;letter-spacing:-0.25px;max-width:234px;overflow:hidden;">Abgang: 010-000 - Immobilien</div>
<div style="position:absolute;left:477px;top:196px;width:110px;height:20px;background:#D5DBE6;border:1px solid #A6ADB8;"></div>
<div class="t" style="left:477px;top:200.69px;font-size:11px;line-height:11px;color:#A7B0BF;letter-spacing:-0.15px;width:108px;text-align:right;">0.00</div>
<div style="position:absolute;left:590px;top:196px;width:139px;height:20px;background:#fff;border:1px solid #7A8699;"></div>
<div class="t" style="left:593px;top:200.69px;font-size:11px;line-height:11px;letter-spacing:-0.25px;width:122px;overflow:hidden;">4420 - Abschreibungen ausserordentlich</div>
<div style="position:absolute;left:715px;top:197px;width:13px;height:18px;background:linear-gradient(to bottom,#F7F8FA 0%,#E4E7EC 55%,#BEC4CE 100%);border-left:1px solid #7A8699;"></div>
<svg style="position:absolute;left:718px;top:204px" width="7" height="5" viewBox="0 0 7 5"><path d="M0.5 0.5 H6.5 L3.5 3.8 Z" fill="#4B5A7C"/></svg>
<div style="position:absolute;left:477px;top:219px;width:110px;height:20px;background:#D5DBE6;border:1px solid #A6ADB8;"></div>
<div class="t" style="left:477px;top:223.69px;font-size:11px;line-height:11px;color:#A7B0BF;letter-spacing:-0.15px;width:108px;text-align:right;">750'000.00</div>
<div style="position:absolute;left:477px;top:242px;width:110px;height:20px;background:#D5DBE6;border:1px solid #A6ADB8;"></div>
<div class="t" style="left:477px;top:246.69px;font-size:11px;line-height:11px;color:#A7B0BF;letter-spacing:-0.15px;width:108px;text-align:right;">750'000.00</div>
<div style="position:absolute;left:477px;top:265px;width:110px;height:20px;background:#D5DBE6;border:1px solid #A6ADB8;"></div>
<div class="t" style="left:477px;top:269.69px;font-size:11px;line-height:11px;color:#A7B0BF;letter-spacing:-0.15px;width:108px;text-align:right;">0.00</div>
<div style="position:absolute;left:477px;top:288px;width:110px;height:20px;background:#fff;border:1px solid #7A8699;"></div>
<div class="t" style="left:477px;top:292.69px;font-size:11px;line-height:11px;color:#000;letter-spacing:-0.15px;width:108px;text-align:right;">0.00</div>
<div style="position:absolute;left:590px;top:288px;width:139px;height:20px;background:#fff;border:1px solid #7A8699;"></div>
<div class="t" style="left:593px;top:292.69px;font-size:11px;line-height:11px;letter-spacing:-0.25px;width:122px;overflow:hidden;">1000 - Kasse</div>
<div style="position:absolute;left:715px;top:289px;width:13px;height:18px;background:linear-gradient(to bottom,#F7F8FA 0%,#E4E7EC 55%,#BEC4CE 100%);border-left:1px solid #7A8699;"></div>
<svg style="position:absolute;left:718px;top:296px" width="7" height="5" viewBox="0 0 7 5"><path d="M0.5 0.5 H6.5 L3.5 3.8 Z" fill="#4B5A7C"/></svg>
<div style="position:absolute;left:477px;top:311px;width:252px;height:20px;background:#fff;border:1px solid #7A8699;"></div>
<div style="position:absolute;left:715px;top:312px;width:13px;height:18px;background:linear-gradient(to bottom,#F7F8FA 0%,#E4E7EC 55%,#BEC4CE 100%);border-left:1px solid #7A8699;"></div>
<svg style="position:absolute;left:718px;top:319px" width="7" height="5" viewBox="0 0 7 5"><path d="M0.5 0.5 H6.5 L3.5 3.8 Z" fill="#4B5A7C"/></svg>
<div style="position:absolute;left:477px;top:334px;width:110px;height:20px;background:#D5DBE6;border:1px solid #A6ADB8;"></div>
<div class="t" style="left:477px;top:338.69px;font-size:11px;line-height:11px;color:#A7B0BF;letter-spacing:-0.15px;width:108px;text-align:right;">750'000.00</div>
<div style="position:absolute;left:590px;top:334px;width:139px;height:20px;background:#fff;border:1px solid #7A8699;"></div>
<div class="t" style="left:593px;top:338.69px;font-size:11px;line-height:11px;letter-spacing:-0.25px;width:122px;overflow:hidden;">4421 - Abschreibungen ausserordentlich</div>
<div style="position:absolute;left:715px;top:335px;width:13px;height:18px;background:linear-gradient(to bottom,#F7F8FA 0%,#E4E7EC 55%,#BEC4CE 100%);border-left:1px solid #7A8699;"></div>
<svg style="position:absolute;left:718px;top:342px" width="7" height="5" viewBox="0 0 7 5"><path d="M0.5 0.5 H6.5 L3.5 3.8 Z" fill="#4B5A7C"/></svg>
<div style="position:absolute;left:754px;top:150px;width:66px;height:20px;background:#fff;border:1px solid #7A8699;"></div>
<div class="t" style="left:754px;top:154.69px;font-size:11px;line-height:11px;color:#000;letter-spacing:-0.15px;width:64px;text-align:right;">100'166</div>
<div style="position:absolute;left:754px;top:173px;width:252px;height:20px;background:#fff;border:1px solid #7A8699;"></div>
<div class="t" style="left:758px;top:177.69px;font-size:11px;line-height:11px;color:#000;letter-spacing:-0.25px;max-width:234px;overflow:hidden;">Abgang: 010-000 - Immobilien</div>
<div style="position:absolute;left:754px;top:196px;width:110px;height:20px;background:#D5DBE6;border:1px solid #A6ADB8;"></div>
<div class="t" style="left:754px;top:200.69px;font-size:11px;line-height:11px;color:#A7B0BF;letter-spacing:-0.15px;width:108px;text-align:right;">0.00</div>
<div style="position:absolute;left:867px;top:196px;width:139px;height:20px;background:#fff;border:1px solid #7A8699;"></div>
<div class="t" style="left:870px;top:200.69px;font-size:11px;line-height:11px;letter-spacing:-0.25px;width:122px;overflow:hidden;">010 - Gebäude</div>
<div style="position:absolute;left:992px;top:197px;width:13px;height:18px;background:linear-gradient(to bottom,#F7F8FA 0%,#E4E7EC 55%,#BEC4CE 100%);border-left:1px solid #7A8699;"></div>
<svg style="position:absolute;left:995px;top:204px" width="7" height="5" viewBox="0 0 7 5"><path d="M0.5 0.5 H6.5 L3.5 3.8 Z" fill="#4B5A7C"/></svg>
<div style="position:absolute;left:754px;top:219px;width:110px;height:20px;background:#D5DBE6;border:1px solid #A6ADB8;"></div>
<div class="t" style="left:754px;top:223.69px;font-size:11px;line-height:11px;color:#A7B0BF;letter-spacing:-0.15px;width:108px;text-align:right;">750'000.00</div>
<div style="position:absolute;left:754px;top:242px;width:110px;height:20px;background:#D5DBE6;border:1px solid #A6ADB8;"></div>
<div class="t" style="left:754px;top:246.69px;font-size:11px;line-height:11px;color:#A7B0BF;letter-spacing:-0.15px;width:108px;text-align:right;">750'000.00</div>
<div style="position:absolute;left:754px;top:265px;width:110px;height:20px;background:#D5DBE6;border:1px solid #A6ADB8;"></div>
<div class="t" style="left:754px;top:269.69px;font-size:11px;line-height:11px;color:#A7B0BF;letter-spacing:-0.15px;width:108px;text-align:right;">0.00</div>
<div style="position:absolute;left:754px;top:288px;width:110px;height:20px;background:#fff;border:1px solid #7A8699;"></div>
<div class="t" style="left:754px;top:292.69px;font-size:11px;line-height:11px;color:#000;letter-spacing:-0.15px;width:108px;text-align:right;">0.00</div>
<div style="position:absolute;left:754px;top:334px;width:110px;height:20px;background:#D5DBE6;border:1px solid #A6ADB8;"></div>
<div class="t" style="left:754px;top:338.69px;font-size:11px;line-height:11px;color:#A7B0BF;letter-spacing:-0.15px;width:108px;text-align:right;">750'000.00</div>
<div style="position:absolute;left:867px;top:334px;width:139px;height:20px;background:#fff;border:1px solid #7A8699;"></div>
<div class="t" style="left:870px;top:338.69px;font-size:11px;line-height:11px;letter-spacing:-0.25px;width:122px;overflow:hidden;">001 - Zeitliche und sachliche</div>
<div style="position:absolute;left:992px;top:335px;width:13px;height:18px;background:linear-gradient(to bottom,#F7F8FA 0%,#E4E7EC 55%,#BEC4CE 100%);border-left:1px solid #7A8699;"></div>
<svg style="position:absolute;left:995px;top:342px" width="7" height="5" viewBox="0 0 7 5"><path d="M0.5 0.5 H6.5 L3.5 3.8 Z" fill="#4B5A7C"/></svg>
<div style="position:absolute;left:1032px;top:173px;width:252px;height:20px;background:#fff;border:1px solid #7A8699;"></div>
<div class="t" style="left:1036px;top:177.69px;font-size:11px;line-height:11px;color:#000;letter-spacing:-0.25px;max-width:234px;overflow:hidden;">Abgang: 010-000 - Immobilien</div>
<div style="position:absolute;left:1032px;top:196px;width:110px;height:20px;background:#D5DBE6;border:1px solid #A6ADB8;"></div>
<div class="t" style="left:1032px;top:200.69px;font-size:11px;line-height:11px;color:#A7B0BF;letter-spacing:-0.15px;width:108px;text-align:right;">0.00</div>
<div style="position:absolute;left:1145px;top:196px;width:139px;height:20px;background:#fff;border:1px solid #7A8699;"></div>
<div style="position:absolute;left:1270px;top:197px;width:13px;height:18px;background:linear-gradient(to bottom,#F7F8FA 0%,#E4E7EC 55%,#BEC4CE 100%);border-left:1px solid #7A8699;"></div>
<svg style="position:absolute;left:1273px;top:204px" width="7" height="5" viewBox="0 0 7 5"><path d="M0.5 0.5 H6.5 L3.5 3.8 Z" fill="#4B5A7C"/></svg>
<div style="position:absolute;left:1032px;top:219px;width:110px;height:20px;background:#D5DBE6;border:1px solid #A6ADB8;"></div>
<div class="t" style="left:1032px;top:223.69px;font-size:11px;line-height:11px;color:#A7B0BF;letter-spacing:-0.15px;width:108px;text-align:right;">750'000.00</div>
<div style="position:absolute;left:1032px;top:242px;width:110px;height:20px;background:#D5DBE6;border:1px solid #A6ADB8;"></div>
<div class="t" style="left:1032px;top:246.69px;font-size:11px;line-height:11px;color:#A7B0BF;letter-spacing:-0.15px;width:108px;text-align:right;">750'000.00</div>
<div style="position:absolute;left:1032px;top:265px;width:110px;height:20px;background:#D5DBE6;border:1px solid #A6ADB8;"></div>
<div class="t" style="left:1032px;top:269.69px;font-size:11px;line-height:11px;color:#A7B0BF;letter-spacing:-0.15px;width:108px;text-align:right;">0.00</div>
<div style="position:absolute;left:1032px;top:288px;width:110px;height:20px;background:#fff;border:1px solid #7A8699;"></div>
<div class="t" style="left:1032px;top:292.69px;font-size:11px;line-height:11px;color:#000;letter-spacing:-0.15px;width:108px;text-align:right;">0.00</div>
<div style="position:absolute;left:1032px;top:334px;width:110px;height:20px;background:#D5DBE6;border:1px solid #A6ADB8;"></div>
<div class="t" style="left:1032px;top:338.69px;font-size:11px;line-height:11px;color:#A7B0BF;letter-spacing:-0.15px;width:108px;text-align:right;">750'000.00</div>
<div style="position:absolute;left:1145px;top:334px;width:139px;height:20px;background:#fff;border:1px solid #7A8699;"></div>
<div style="position:absolute;left:1270px;top:335px;width:13px;height:18px;background:linear-gradient(to bottom,#F7F8FA 0%,#E4E7EC 55%,#BEC4CE 100%);border-left:1px solid #7A8699;"></div>
<svg style="position:absolute;left:1273px;top:342px" width="7" height="5" viewBox="0 0 7 5"><path d="M0.5 0.5 H6.5 L3.5 3.8 Z" fill="#4B5A7C"/></svg>
<div class="t" style="left:347px;top:407.69px;font-size:11px;line-height:11px;color:#000;letter-spacing:-0.12px;">Abschreibung</div>
<div class="t" style="left:347px;top:430.69px;font-size:11px;line-height:11px;color:#000;letter-spacing:-0.12px;">Ausb. Anschaffungswert</div>
<div class="t" style="left:347px;top:453.69px;font-size:11px;line-height:11px;color:#000;letter-spacing:-0.12px;">Ausb. kum. Abschreibung</div>
<div class="t" style="left:347px;top:476.69px;font-size:11px;line-height:11px;color:#000;letter-spacing:-0.12px;">Geldbuchung</div>
<div class="t" style="left:477px;top:407.69px;font-size:11px;line-height:11px;color:#000;letter-spacing:-0.3px;">Sollkonto</div>
<div class="t" style="left:757px;top:407.69px;font-size:11px;line-height:11px;color:#000;letter-spacing:-0.3px;">Haben</div>
<div class="t" style="left:1032px;top:407.69px;font-size:11px;line-height:11px;color:#000;letter-spacing:-0.3px;">Betrag</div>
<div style="position:absolute;left:546px;top:403px;width:183px;height:20px;background:#80FF80;border:1px solid #7D8098;"></div>
<div style="position:absolute;left:823px;top:403px;width:183px;height:20px;background:#80FF80;border:1px solid #7D8098;"></div>
<div style="position:absolute;left:1101px;top:403px;width:183px;height:20px;background:#D5DBE6;border:1px solid #A6ADB8;"></div>
<div class="t" style="left:1101px;top:407.69px;font-size:11px;line-height:11px;color:#A7B0BF;letter-spacing:-0.15px;width:181px;text-align:right;">0.00</div>
<div style="position:absolute;left:546px;top:426px;width:183px;height:20px;background:#80FF80;border:1px solid #7D8098;"></div>
<div style="position:absolute;left:823px;top:426px;width:183px;height:20px;background:#80FF80;border:1px solid #7D8098;"></div>
<div style="position:absolute;left:1101px;top:426px;width:183px;height:20px;background:#D5DBE6;border:1px solid #A6ADB8;"></div>
<div class="t" style="left:1101px;top:430.69px;font-size:11px;line-height:11px;color:#A7B0BF;letter-spacing:-0.15px;width:181px;text-align:right;">0.00</div>
<div style="position:absolute;left:546px;top:449px;width:183px;height:20px;background:#80FF80;border:1px solid #7D8098;"></div>
<div style="position:absolute;left:823px;top:449px;width:183px;height:20px;background:#80FF80;border:1px solid #7D8098;"></div>
<div style="position:absolute;left:1101px;top:449px;width:183px;height:20px;background:#D5DBE6;border:1px solid #A6ADB8;"></div>
<div class="t" style="left:1101px;top:453.69px;font-size:11px;line-height:11px;color:#A7B0BF;letter-spacing:-0.15px;width:181px;text-align:right;">0.00</div>
<div style="position:absolute;left:546px;top:472px;width:183px;height:20px;background:#80FF80;border:1px solid #7D8098;"></div>
<div style="position:absolute;left:823px;top:472px;width:183px;height:20px;background:#80FF80;border:1px solid #7D8098;"></div>
<div style="position:absolute;left:1101px;top:472px;width:183px;height:20px;background:#D5DBE6;border:1px solid #A6ADB8;"></div>
<div class="t" style="left:1101px;top:476.69px;font-size:11px;line-height:11px;color:#A7B0BF;letter-spacing:-0.15px;width:181px;text-align:right;">0.00</div>
<div style="position:absolute;left:1013px;top:508px;width:92px;height:26px;background:#F0F0F0;border:1px solid #A3A3A3;"></div>

<svg style="position:absolute;left:1022px;top:513px" width="15" height="16" viewBox="0 0 15 16"><rect x="0.5" y="0.5" width="14" height="15" rx="1.5" fill="#8C8C8C" stroke="#7E7E7E"/><rect x="2.5" y="1" width="10" height="6.5" fill="#E6E6E6"/><path d="M3 3 H12 M3 4.5 H12 M3 6 H12" stroke="#C4C4C4" stroke-width="0.7"/><rect x="4" y="10" width="7.5" height="5.5" fill="#D9D9D9"/><rect x="5" y="11" width="2" height="3" fill="#7A7A7A"/><path d="M8 15 L10.5 10.5" stroke="#F4F4F4" stroke-width="1.2"/></svg>
<div class="t" style="left:1042px;top:516.69px;font-size:11px;line-height:11px;color:#6D6D6D;letter-spacing:-0.2px;">Verbuchen</div>
<div style="position:absolute;left:1111px;top:508px;width:92px;height:26px;background:linear-gradient(to bottom,#F3F4F8 0%,#ECEEF2 50%,#DADDE5 75%,#B9BFCB 100%);border:1px solid #7D889B;"></div>

<svg style="position:absolute;left:1120px;top:513px" width="15" height="16" viewBox="0 0 15 16"><g transform="translate(7.5,8)"><circle r="6.6" fill="none" stroke="#8C92F0" stroke-width="1.8" stroke-dasharray="1.5 1.1"/><circle r="5.6" fill="#8E94F4"/><path d="M-4.6 -2.2 A5 5 0 0 1 4.4 -2.6" stroke="#5C62DA" stroke-width="2.2" fill="none"/><ellipse rx="2.6" ry="3.2" fill="#FFFFFF"/><path d="M-3 4.2 A5 5 0 0 0 3 4.2" stroke="#C8CCF8" stroke-width="1.2" fill="none"/></g></svg>
<div class="t" style="left:1141px;top:516.69px;font-size:11px;line-height:11px;color:#000;letter-spacing:-0.2px;">Berechnen</div>
<div style="position:absolute;left:1209px;top:508px;width:92px;height:26px;background:linear-gradient(to bottom,#F3F4F8 0%,#ECEEF2 50%,#DADDE5 75%,#B9BFCB 100%);border:1px solid #7D889B;"></div>

<svg style="position:absolute;left:1218px;top:513px" width="14" height="15" viewBox="0 0 14 15"><path d="M2.3 3 L11.7 12.2 M11.7 3 L2.3 12.2" stroke="#F2404E" stroke-width="2.8" stroke-linecap="square"/><path d="M3 3.7 L11 11.5 M11 3.7 L3 11.5" stroke="#FF6A74" stroke-width="0.8"/></svg>
<div class="t" style="left:1238px;top:516.69px;font-size:11px;line-height:11px;color:#000;letter-spacing:-0.2px;">Abbrechen</div>
</body></html>
